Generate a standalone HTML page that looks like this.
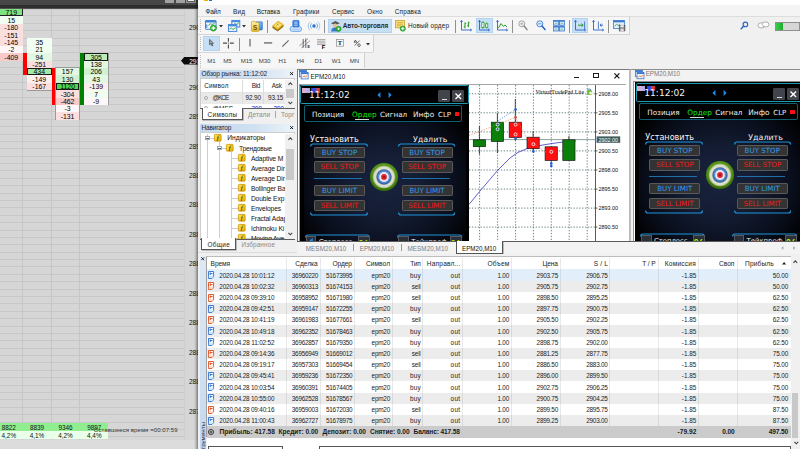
<!DOCTYPE html>
<html lang="ru">
<head>
<meta charset="utf-8">
<title>MetaTrader 5 - VirtualTradePad</title>
<style>
html,body{margin:0;padding:0;}
body{width:800px;height:449px;overflow:hidden;background:#f0f0f0;font-family:"Liberation Sans",sans-serif;}
#root{position:relative;width:800px;height:449px;overflow:hidden;}
#root div{position:absolute;box-sizing:border-box;}
#root svg{position:absolute;overflow:visible;}
.t{white-space:nowrap;}
</style>
</head>
<body>
<div id="root">
<!-- ===== left footprint chart window ===== -->
<div style="left:0.00px;top:0.00px;width:198.00px;height:449.00px;background:#d6d6d6;"></div>
<div style="left:0;top:8.40px;width:183.5px;height:431.60px;background:repeating-linear-gradient(to bottom,#c8c8c8 0,#c8c8c8 1px,rgba(0,0,0,0) 1px,rgba(0,0,0,0) 7.385px);"></div>
<div style="left:22.00px;top:9.00px;width:1.00px;height:431.00px;background:#c6c6c6;"></div>
<div style="left:51.10px;top:9.00px;width:1.00px;height:431.00px;background:#c6c6c6;"></div>
<div style="left:79.10px;top:9.00px;width:1.00px;height:431.00px;background:#c6c6c6;"></div>
<div style="left:183.80px;top:9.00px;width:0.80px;height:431.00px;background:#cecece;"></div>
<div style="left:0.00px;top:440.00px;width:198.00px;height:9.00px;background:#dcdcdc;"></div>
<div style="left:0;top:0;width:198px;height:10px;background:linear-gradient(to bottom,#474747 0,#474747 4.6px,#2e2e2e 5.2px,#2e2e2e 8.2px,#d6d6d6 9.6px);"></div>
<div style="left:165.40px;top:0.00px;width:8.60px;height:3.20px;background:#a2a0a0;"></div>
<div style="left:176.00px;top:0.00px;width:8.90px;height:3.20px;background:#a2a0a0;"></div>
<div style="left:186.00px;top:0.00px;width:10.00px;height:3.40px;background:#5a5a5a;border:0.7px solid #9a9a9a;border-top:none;"></div>
<div style="left:187.60px;top:0.00px;width:6.60px;height:1.40px;background:#f0f0f0;"></div>
<div style="left:26.50px;top:37.94px;width:25.50px;height:52.70px;border:1px solid #9a9a9a;"></div>
<div style="left:55.10px;top:67.48px;width:24.90px;height:52.70px;border:1px solid #9a9a9a;"></div>
<div style="left:83.50px;top:52.71px;width:25.30px;height:52.70px;border:1px solid #9a9a9a;"></div>
<div style="left:0.00px;top:8.90px;width:22.50px;height:7.38px;background:#7fe47f;border-right:1px solid #222;border-bottom:1px solid #222;"></div>
<div class="t" style="top:8px;font-size:6.9px;line-height:9px;color:#000;left:-88.75px;width:200px;text-align:center;"><span>719</span></div>
<div style="left:0.00px;top:16.29px;width:22.50px;height:7.38px;background:#f1fdf1;"></div>
<div class="t" style="top:16px;font-size:6.9px;line-height:9px;color:#000;left:-88.75px;width:200px;text-align:center;"><span>15</span></div>
<div style="left:0.00px;top:23.67px;width:22.50px;height:7.38px;background:#fbdfdf;"></div>
<div class="t" style="top:23px;font-size:6.9px;line-height:9px;color:#000;left:-88.75px;width:200px;text-align:center;"><span>-180</span></div>
<div style="left:0.00px;top:31.05px;width:22.50px;height:7.38px;background:#fbdfdf;"></div>
<div class="t" style="top:31px;font-size:6.9px;line-height:9px;color:#000;left:-88.75px;width:200px;text-align:center;"><span>-151</span></div>
<div style="left:0.00px;top:38.44px;width:22.50px;height:7.38px;background:#fbdfdf;"></div>
<div class="t" style="top:38px;font-size:6.9px;line-height:9px;color:#000;left:-88.75px;width:200px;text-align:center;"><span>-145</span></div>
<div style="left:0.00px;top:45.82px;width:22.50px;height:7.38px;background:#fff7f7;"></div>
<div class="t" style="top:45px;font-size:6.9px;line-height:9px;color:#000;left:-88.75px;width:200px;text-align:center;"><span>-2</span></div>
<div style="left:0.00px;top:53.21px;width:22.50px;height:7.38px;background:#f7c9c9;"></div>
<div class="t" style="top:53px;font-size:6.9px;line-height:9px;color:#000;left:-88.75px;width:200px;text-align:center;"><span>-409</span></div>
<div style="left:27.00px;top:38.44px;width:24.50px;height:7.38px;background:#f1fdf1;"></div>
<div class="t" style="top:38px;font-size:6.9px;line-height:9px;color:#000;left:-60.75px;width:200px;text-align:center;"><span>35</span></div>
<div style="left:27.00px;top:45.82px;width:24.50px;height:7.38px;background:#f1fdf1;"></div>
<div class="t" style="top:45px;font-size:6.9px;line-height:9px;color:#000;left:-60.75px;width:200px;text-align:center;"><span>21</span></div>
<div style="left:27.00px;top:53.21px;width:24.50px;height:7.38px;background:#e2f8e2;"></div>
<div class="t" style="top:53px;font-size:6.9px;line-height:9px;color:#000;left:-60.75px;width:200px;text-align:center;"><span>94</span></div>
<div style="left:27.00px;top:60.59px;width:24.50px;height:7.38px;background:#fbdfdf;"></div>
<div class="t" style="top:60px;font-size:6.9px;line-height:9px;color:#000;left:-60.75px;width:200px;text-align:center;"><span>-251</span></div>
<div style="left:27.00px;top:67.98px;width:24.50px;height:7.38px;background:#a6e8a6;border:0.8px solid #1a1a1a;"></div>
<div class="t" style="top:67px;font-size:6.9px;line-height:9px;color:#000;left:-60.75px;width:200px;text-align:center;"><span>434</span></div>
<div style="left:27.00px;top:75.37px;width:24.50px;height:7.38px;background:#fdeeee;"></div>
<div class="t" style="top:75px;font-size:6.9px;line-height:9px;color:#000;left:-60.75px;width:200px;text-align:center;"><span>-149</span></div>
<div style="left:27.00px;top:82.75px;width:24.50px;height:7.38px;background:#fbdfdf;"></div>
<div class="t" style="top:82px;font-size:6.9px;line-height:9px;color:#000;left:-60.75px;width:200px;text-align:center;"><span>-167</span></div>
<div style="left:55.60px;top:67.98px;width:23.90px;height:7.38px;background:#e2f8e2;"></div>
<div class="t" style="top:67px;font-size:6.9px;line-height:9px;color:#000;left:-32.45px;width:200px;text-align:center;"><span>157</span></div>
<div style="left:55.60px;top:75.37px;width:23.90px;height:7.38px;background:#d0f2d0;"></div>
<div class="t" style="top:75px;font-size:6.9px;line-height:9px;color:#000;left:-32.45px;width:200px;text-align:center;"><span>130</span></div>
<div style="left:55.60px;top:82.75px;width:23.90px;height:7.38px;background:#4fd64f;border:0.8px solid #1a1a1a;"></div>
<div class="t" style="top:82px;font-size:6.9px;line-height:9px;color:#000;left:-32.45px;width:200px;text-align:center;"><span>1120</span></div>
<div style="left:55.60px;top:90.14px;width:23.90px;height:7.38px;background:#fbdfdf;"></div>
<div class="t" style="top:90px;font-size:6.9px;line-height:9px;color:#000;left:-32.45px;width:200px;text-align:center;"><span>-304</span></div>
<div style="left:55.60px;top:97.52px;width:23.90px;height:7.38px;background:#f7c9c9;"></div>
<div class="t" style="top:97px;font-size:6.9px;line-height:9px;color:#000;left:-32.45px;width:200px;text-align:center;"><span>-462</span></div>
<div style="left:55.60px;top:104.91px;width:23.90px;height:7.38px;background:#fff7f7;"></div>
<div class="t" style="top:104px;font-size:6.9px;line-height:9px;color:#000;left:-32.45px;width:200px;text-align:center;"><span>-3</span></div>
<div style="left:55.60px;top:112.29px;width:23.90px;height:7.38px;background:#fbdfdf;"></div>
<div class="t" style="top:112px;font-size:6.9px;line-height:9px;color:#000;left:-32.45px;width:200px;text-align:center;"><span>-131</span></div>
<div style="left:84.00px;top:53.21px;width:24.30px;height:7.38px;background:#b8ecb8;border:0.8px solid #1a1a1a;"></div>
<div class="t" style="top:53px;font-size:6.9px;line-height:9px;color:#000;left:-3.85px;width:200px;text-align:center;"><span>305</span></div>
<div style="left:84.00px;top:60.59px;width:24.30px;height:7.38px;background:#e2f8e2;"></div>
<div class="t" style="top:60px;font-size:6.9px;line-height:9px;color:#000;left:-3.85px;width:200px;text-align:center;"><span>138</span></div>
<div style="left:84.00px;top:67.98px;width:24.30px;height:7.38px;background:#d0f2d0;"></div>
<div class="t" style="top:67px;font-size:6.9px;line-height:9px;color:#000;left:-3.85px;width:200px;text-align:center;"><span>206</span></div>
<div style="left:84.00px;top:75.37px;width:24.30px;height:7.38px;background:#e2f8e2;"></div>
<div class="t" style="top:75px;font-size:6.9px;line-height:9px;color:#000;left:-3.85px;width:200px;text-align:center;"><span>43</span></div>
<div style="left:84.00px;top:82.75px;width:24.30px;height:7.38px;background:#fdeeee;"></div>
<div class="t" style="top:82px;font-size:6.9px;line-height:9px;color:#000;left:-3.85px;width:200px;text-align:center;"><span>-139</span></div>
<div style="left:84.00px;top:90.14px;width:24.30px;height:7.38px;background:#f1fdf1;"></div>
<div class="t" style="top:90px;font-size:6.9px;line-height:9px;color:#000;left:-3.85px;width:200px;text-align:center;"><span>7</span></div>
<div style="left:84.00px;top:97.52px;width:24.30px;height:7.38px;background:#fff7f7;"></div>
<div class="t" style="top:97px;font-size:6.9px;line-height:9px;color:#000;left:-3.85px;width:200px;text-align:center;"><span>-9</span></div>
<div style="left:23.00px;top:53.21px;width:3.50px;height:22.16px;background:#ff0000;"></div>
<div style="left:51.60px;top:67.98px;width:3.60px;height:36.92px;background:#ff0000;"></div>
<div style="left:80.30px;top:53.21px;width:3.50px;height:51.70px;background:#008000;"></div>
<div style="left:0.00px;top:423.00px;width:108.30px;height:8.30px;background:#90ee90;"></div>
<div style="left:0.00px;top:431.30px;width:108.30px;height:7.70px;background:#e9ffe9;"></div>
<div class="t" style="top:423px;font-size:6.4px;line-height:9px;color:#111;left:-91.20px;width:200px;text-align:center;"><span>8822</span></div>
<div class="t" style="top:431px;font-size:6.4px;line-height:9px;color:#111;left:-91.20px;width:200px;text-align:center;"><span>4,2%</span></div>
<div class="t" style="top:423px;font-size:6.4px;line-height:9px;color:#111;left:-63.00px;width:200px;text-align:center;"><span>8839</span></div>
<div class="t" style="top:431px;font-size:6.4px;line-height:9px;color:#111;left:-63.00px;width:200px;text-align:center;"><span>4,1%</span></div>
<div class="t" style="top:423px;font-size:6.4px;line-height:9px;color:#111;left:-34.50px;width:200px;text-align:center;"><span>9346</span></div>
<div class="t" style="top:431px;font-size:6.4px;line-height:9px;color:#111;left:-34.50px;width:200px;text-align:center;"><span>4,2%</span></div>
<div class="t" style="top:423px;font-size:6.4px;line-height:9px;color:#111;left:-5.70px;width:200px;text-align:center;"><span>9897</span></div>
<div class="t" style="top:431px;font-size:6.4px;line-height:9px;color:#111;left:-5.70px;width:200px;text-align:center;"><span>4,4%</span></div>
<div class="t" style="top:426px;font-size:6.0px;line-height:8px;color:#333;letter-spacing:0.070px;left:93.80px;">Оставшееся время =00:07:59</div>
<div class="t" style="top:447px;font-size:6px;line-height:8px;color:#444;left:16.00px;">11:00</div>
<div class="t" style="top:447px;font-size:6px;line-height:8px;color:#444;left:60.00px;">11:10</div>
<div class="t" style="top:23px;font-size:6.6px;line-height:9px;color:#111;left:188.90px;">2903</div>
<div class="t" style="top:83px;font-size:6.6px;line-height:9px;color:#111;left:188.90px;">2903</div>
<div class="t" style="top:112px;font-size:6.6px;line-height:9px;color:#111;left:188.90px;">2893</div>
<div class="t" style="top:142px;font-size:6.6px;line-height:9px;color:#111;left:188.90px;">2893</div>
<div class="t" style="top:171px;font-size:6.6px;line-height:9px;color:#111;left:188.90px;">2883</div>
<div class="t" style="top:200px;font-size:6.6px;line-height:9px;color:#111;left:188.90px;">2883</div>
<div class="t" style="top:230px;font-size:6.6px;line-height:9px;color:#111;left:188.90px;">2883</div>
<div class="t" style="top:259px;font-size:6.6px;line-height:9px;color:#111;left:188.90px;">2883</div>
<div class="t" style="top:289px;font-size:6.6px;line-height:9px;color:#111;left:188.90px;">2883</div>
<div class="t" style="top:318px;font-size:6.6px;line-height:9px;color:#111;left:188.90px;">2883</div>
<div class="t" style="top:348px;font-size:6.6px;line-height:9px;color:#111;left:188.90px;">2883</div>
<div class="t" style="top:377px;font-size:6.6px;line-height:9px;color:#111;left:188.90px;">2883</div>
<div class="t" style="top:407px;font-size:6.6px;line-height:9px;color:#111;left:188.90px;">2873</div>
<svg style="left:181px;top:57px" width="17" height="8" viewBox="0 0 17 8"><path d="M0 3.8 L3.2 0 H17 V7.6 H3.2 Z" fill="#0a0a0a"/></svg>
<div class="t" style="top:57px;font-size:6.6px;line-height:9px;color:#fff;left:189.20px;">2902</div>
<!-- ===== MetaTrader main window chrome ===== -->
<div style="left:194.4px;top:0;width:3.8px;height:449px;background:linear-gradient(to right,rgba(0,0,0,0) 0,rgba(0,0,0,.12) 40%,rgba(0,0,0,.42) 100%);"></div>
<div style="left:198.20px;top:0.00px;width:601.80px;height:449.00px;background:#f0f0f0;"></div>
<div style="left:198.00px;top:0.00px;width:602.00px;height:5.30px;background:#ffffff;"></div>
<div style="left:198.00px;top:5.30px;width:602.00px;height:11.00px;background:#f4f4f4;"></div>
<div style="left:198.00px;top:16.30px;width:602.00px;height:0.80px;background:#dddddd;"></div>
<div style="left:198.00px;top:17.10px;width:431.00px;height:17.00px;background:#f6f6f6;"></div>
<div style="left:198.00px;top:34.00px;width:431.60px;height:0.80px;background:#d4d4d4;"></div>
<div style="left:628.80px;top:17.10px;width:0.80px;height:17.60px;background:#d4d4d4;"></div>
<div style="left:198.00px;top:34.80px;width:175.00px;height:17.20px;background:#f6f6f6;"></div>
<div style="left:198.00px;top:52.00px;width:175.00px;height:0.80px;background:#d8d8d8;"></div>
<div style="left:198.00px;top:52.80px;width:166.00px;height:15.60px;background:#f6f6f6;"></div>
<div style="left:372.50px;top:34.80px;width:0.80px;height:17.50px;background:#d0d0d0;"></div>
<div style="left:363.50px;top:52.80px;width:0.80px;height:15.60px;background:#d0d0d0;"></div>
<div style="left:203.60px;top:0.00px;width:4.80px;height:0.90px;background:#e8b400;"></div>
<div style="left:208.80px;top:0.00px;width:2.80px;height:0.90px;background:#1e6fd0;"></div>
<div class="t" style="top:7px;font-size:6.4px;line-height:9px;color:#1a1a1a;letter-spacing:-0.173px;left:205.50px;">Файл</div>
<div class="t" style="top:7px;font-size:6.4px;line-height:9px;color:#1a1a1a;letter-spacing:0.219px;left:233.00px;">Вид</div>
<div class="t" style="top:7px;font-size:6.4px;line-height:9px;color:#1a1a1a;letter-spacing:-0.094px;left:256.80px;">Вставка</div>
<div class="t" style="top:7px;font-size:6.4px;line-height:9px;color:#1a1a1a;letter-spacing:0.132px;left:293.00px;">Графики</div>
<div class="t" style="top:7px;font-size:6.4px;line-height:9px;color:#1a1a1a;letter-spacing:0.062px;left:332.00px;">Сервис</div>
<div class="t" style="top:7px;font-size:6.4px;line-height:9px;color:#1a1a1a;letter-spacing:0.214px;left:367.00px;">Окно</div>
<div class="t" style="top:7px;font-size:6.4px;line-height:9px;color:#1a1a1a;letter-spacing:0.154px;left:394.80px;">Справка</div>
<div style="left:200px;top:19px;width:1px;height:13px;background:repeating-linear-gradient(to bottom,#b8b8b8 0,#b8b8b8 1px,rgba(0,0,0,0) 1px,rgba(0,0,0,0) 2px);"></div>
<div style="left:200px;top:37px;width:1px;height:13px;background:repeating-linear-gradient(to bottom,#b8b8b8 0,#b8b8b8 1px,rgba(0,0,0,0) 1px,rgba(0,0,0,0) 2px);"></div>
<div style="left:200px;top:55px;width:1px;height:13px;background:repeating-linear-gradient(to bottom,#b8b8b8 0,#b8b8b8 1px,rgba(0,0,0,0) 1px,rgba(0,0,0,0) 2px);"></div>
<svg style="left:204.8px;top:19.9px" width="12.4" height="11.6" viewBox="0 0 12.4 11.6"><rect x="0.5" y="0.5" width="10.6" height="8.8" rx=".5" fill="#f0f6ff" stroke="#3f82dc" stroke-width="1"/><rect x="0.5" y="0.5" width="10.6" height="2" fill="#3f82dc"/><path d="M1.6 4.4 V8 M1 5.4 H2.6 M1 7 H2.6" stroke="#4a86d8" stroke-width=".7"/><path d="M3.4 5.4 L5.2 3.8 L7.4 4.4 L9.6 3.4" stroke="#38a838" stroke-width=".9" fill="none"/><circle cx="8.4" cy="8.1" r="3.1" fill="#36b836" stroke="#1f8f1f" stroke-width=".5"/><path d="M8.4 6.2 V10 M6.5 8.1 H10.3" stroke="#fff" stroke-width="1.2"/></svg>
<svg style="left:219px;top:24.6px" width="4" height="2.4" viewBox="0 0 4 2.4"><path d="M0 0 H4 L2 2.4 Z" fill="#333"/></svg>
<svg style="left:227.7px;top:19.6px" width="12.5" height="12" viewBox="0 0 12.5 12"><rect x="3.8" y="0.4" width="8" height="6.6" fill="#e4f0ff" stroke="#3d7fd8" stroke-width=".9"/><rect x="3.8" y="0.4" width="8" height="1.8" fill="#4a8be0"/><path d="M5 5 L7 3.6 L8.6 4.6 L10.8 2.8" stroke="#35a535" stroke-width=".9" fill="none"/><rect x="0.4" y="4.6" width="8.4" height="6.8" fill="#eef6ff" stroke="#3d7fd8" stroke-width=".9"/><rect x="0.4" y="4.6" width="8.4" height="1.8" fill="#4a8be0"/><path d="M1.4 9.2 L3.2 8 L5 9.4 L7.8 7.6" stroke="#35a535" stroke-width=".9" fill="none"/></svg>
<svg style="left:242px;top:24.6px" width="4" height="2.4" viewBox="0 0 4 2.4"><path d="M0 0 H4 L2 2.4 Z" fill="#333"/></svg>
<svg style="left:251px;top:19.6px" width="12" height="12" viewBox="0 0 12 12"><defs><linearGradient id="mk1" x1="0" y1="0" x2="1" y2="1"><stop offset="0" stop-color="#a8d4ff"/><stop offset="1" stop-color="#2a7fe0"/></linearGradient><linearGradient id="mk2" x1="0" y1="0" x2="0" y2="1"><stop offset="0" stop-color="#fff2a8"/><stop offset="1" stop-color="#ecbc28"/></linearGradient></defs><rect x="4.4" y="1.8" width="7" height="8.2" rx=".8" fill="url(#mk1)" stroke="#2a6fc4" stroke-width=".6"/><path d="M0.4 2.2 a.8 .8 0 0 1 .8 -.8 H4 l.8 1 H7.2 a.8 .8 0 0 1 .8 .8 V10.6 a.8 .8 0 0 1 -.8 .8 H1.2 a.8 .8 0 0 1 -.8 -.8 Z" fill="url(#mk2)" stroke="#c09410" stroke-width=".6"/><text x="4.2" y="9.8" font-size="6.4" font-weight="bold" text-anchor="middle" fill="#6e5200" font-family="Liberation Sans, sans-serif">S</text></svg>
<div style="left:266.80px;top:19.50px;width:0.90px;height:13.00px;background:#909090;"></div>
<svg style="left:272px;top:19.8px" width="12" height="11.6" viewBox="0 0 12 11.6"><path d="M0.5 5.8 L6.2 0.9 L11.5 4.5 L11.5 6.3 L5.7 11 L0.5 7.5 Z" fill="#a87a08"/><path d="M0.5 5.8 L6.2 0.9 L11.5 4.5 L5.7 9.4 Z" fill="#efc838"/><path d="M2.4 5.6 L6.2 2.4 L9.4 4.5 L5.7 7.6 Z" fill="#fbe88c"/><path d="M4.4 5.4 L7.2 3.6" stroke="#a87a08" stroke-width=".8"/><path d="M0.5 7.5 L5.7 11 L11.5 6.3" fill="none" stroke="#7e5a04" stroke-width=".7"/></svg>
<svg style="left:290px;top:19.6px" width="12.4" height="12" viewBox="0 0 12.4 12"><path d="M2.6 11.4 a2.5 2.5 0 0 1 -0.2 -5 a3 3 0 0 1 1.6 -1.2 h4.4 a3 3 0 0 1 1.6 1.6 a2.4 2.4 0 0 1 0 4.6 Z" fill="#cfe3fa" stroke="#5a96e0" stroke-width=".8"/><rect x="2.8" y="0.4" width="6.2" height="6.6" rx=".7" fill="#3c86e6" stroke="#205fc2" stroke-width=".6"/><path d="M4.2 2.2 H7.6 M4.2 3.8 H7.6 M4.2 5.4 H7.6" stroke="#d8e8ff" stroke-width=".7"/><path d="M2.2 9.2 H10.2" stroke="#8ab8f0" stroke-width=".7"/></svg>
<svg style="left:307.5px;top:19.8px" width="12" height="12" viewBox="0 0 12 12"><circle cx="6" cy="6" r="1.7" fill="#2a6fd0"/><path d="M3.6 3.4 a3.6 3.6 0 0 0 0 5.2 M8.4 3.4 a3.6 3.6 0 0 1 0 5.2" fill="none" stroke="#5a94e0" stroke-width=".8"/><path d="M2 1.8 a5.8 5.8 0 0 0 0 8.4 M10 1.8 a5.8 5.8 0 0 1 0 8.4" fill="none" stroke="#8ab4ea" stroke-width=".7"/></svg>
<div style="left:323.90px;top:19.50px;width:0.90px;height:13.00px;background:#909090;"></div>
<div style="left:327.50px;top:18.50px;width:64.30px;height:14.50px;background:#c6dff5;border:0.5px solid #b4d3ee;"></div>
<svg style="left:329.5px;top:19.8px" width="12" height="12" viewBox="0 0 12 12"><path d="M1 3.2 L5.4 1 L9.8 3.2 L5.4 5.2 Z" fill="#555"/><circle cx="5.2" cy="5.6" r="2.1" fill="#e8c090"/><path d="M1.2 11.4 a4 4 0 0 1 8 0 Z" fill="#3a78c8"/><circle cx="8.6" cy="8.8" r="2.6" fill="#2fb42f" stroke="#1c8a1c" stroke-width=".5"/><path d="M7.8 7.4 L10 8.8 L7.8 10.2 Z" fill="#fff"/></svg>
<div class="t" style="top:21px;font-size:6.4px;line-height:9px;color:#2c2c2c;font-weight:bold;letter-spacing:-0.093px;left:342.80px;">Авто-торговля</div>
<svg style="left:395.4px;top:19.6px" width="11" height="12" viewBox="0 0 11 12"><rect x="0.5" y="0.6" width="9" height="7.2" fill="#f8e08a" stroke="#c8a020" stroke-width=".8"/><path d="M1.8 2.6 H8 M1.8 4.2 H8 M1.8 5.8 H6" stroke="#c8a020" stroke-width=".7"/><circle cx="7.8" cy="8.6" r="2.7" fill="#34b534" stroke="#1f8f1f" stroke-width=".5"/><path d="M7.8 7 V10.2 M6.2 8.6 H9.4" stroke="#fff" stroke-width="1"/></svg>
<div class="t" style="top:21px;font-size:6.4px;line-height:9px;color:#222;letter-spacing:0.169px;left:408.00px;">Новый ордер</div>
<div style="left:455.10px;top:19.50px;width:0.90px;height:13.00px;background:#909090;"></div>
<svg style="left:459.6px;top:19.8px" width="12" height="12" viewBox="0 0 12 12"><path d="M1.5 0.5 V10 H11.5" stroke="#2a62c8" stroke-width=".9" fill="none"/><path d="M0.3 2 L1.5 0.3 L2.7 2 M10 8.8 L11.7 10 L10 11.2" stroke="#2a62c8" stroke-width=".7" fill="none"/><path d="M5 2.4 V8.4 M3.8 6.8 H5 M5 3.6 H6.2 M8.4 1.6 V7.2 M7.2 5.6 H8.4 M8.4 2.8 H9.6" stroke="#2c9a2c" stroke-width="1"/></svg>
<div style="left:475.90px;top:18.40px;width:16.90px;height:14.40px;background:#c6dff5;border:0.5px solid #b4d3ee;"></div>
<svg style="left:478.4px;top:19.8px" width="12" height="12" viewBox="0 0 12 12"><path d="M1.5 0.5 V10 H11.5" stroke="#2a62c8" stroke-width=".9" fill="none"/><path d="M0.3 2 L1.5 0.3 L2.7 2 M10 8.8 L11.7 10 L10 11.2" stroke="#2a62c8" stroke-width=".7" fill="none"/><rect x="3.8" y="2.6" width="2.2" height="5" fill="#fff" stroke="#2c9a2c" stroke-width=".8"/><path d="M4.9 1.2 V2.6 M4.9 7.6 V8.8" stroke="#2c9a2c" stroke-width=".8"/><rect x="7.6" y="3.8" width="2.2" height="3.4" fill="#fff" stroke="#2c9a2c" stroke-width=".8"/><path d="M8.7 2.4 V3.8 M8.7 7.2 V8.6" stroke="#2c9a2c" stroke-width=".8"/></svg>
<svg style="left:495.6px;top:19.8px" width="12" height="12" viewBox="0 0 12 12"><path d="M1.5 0.5 V10 H11.5" stroke="#2a62c8" stroke-width=".9" fill="none"/><path d="M0.3 2 L1.5 0.3 L2.7 2 M10 8.8 L11.7 10 L10 11.2" stroke="#2a62c8" stroke-width=".7" fill="none"/><path d="M2.4 8 L5 3.6 L7.4 6.4 L9 5 L11 7" stroke="#2c9a2c" stroke-width="1" fill="none"/></svg>
<div style="left:512.20px;top:19.50px;width:0.90px;height:13.00px;background:#909090;"></div>
<svg style="left:517.6px;top:20.2px" width="10" height="11" viewBox="0 0 10 11"><circle cx="3.8" cy="3.8" r="3" fill="#f4f4f4" stroke="#9a9a9a" stroke-width=".9"/><path d="M2.2 3.8 H5.4 M3.8 2.2 V5.4" stroke="#9a9a9a" stroke-width=".7"/><path d="M6 6 L9 9.6" stroke="#8a8a8a" stroke-width="1.5" stroke-linecap="round"/></svg>
<svg style="left:535.6px;top:20.2px" width="10" height="11" viewBox="0 0 10 11"><circle cx="3.8" cy="3.8" r="3" fill="#e8f2ff" stroke="#3a78d0" stroke-width=".9"/><path d="M2.2 3.8 H5.4" stroke="#3a78d0" stroke-width=".8"/><path d="M6 6 L9 9.6" stroke="#2a62c0" stroke-width="1.5" stroke-linecap="round"/></svg>
<svg style="left:553px;top:20px" width="12" height="11.5" viewBox="0 0 12 11.5"><rect x="0.4" y="0.4" width="5" height="4.8" fill="#dceaff" stroke="#3a78d0" stroke-width=".8"/><rect x="6.4" y="0.4" width="5" height="4.8" fill="#dceaff" stroke="#3a78d0" stroke-width=".8"/><rect x="0.4" y="6.2" width="5" height="4.8" fill="#dceaff" stroke="#3a78d0" stroke-width=".8"/><rect x="6.4" y="6.2" width="5" height="4.8" fill="#dceaff" stroke="#3a78d0" stroke-width=".8"/><rect x="0.4" y="0.4" width="5" height="1.3" fill="#3a78d0"/><rect x="6.4" y="0.4" width="5" height="1.3" fill="#3a78d0"/><rect x="0.4" y="6.2" width="5" height="1.3" fill="#3a78d0"/><rect x="6.4" y="6.2" width="5" height="1.3" fill="#3a78d0"/><path d="M1.4 4 L2.8 3 L4.4 3.8 M7.4 4 L8.8 3 L10.4 3.8 M1.4 9.8 L2.8 8.8 L4.4 9.6 M7.4 9.8 L8.8 8.8 L10.4 9.6" stroke="#35a535" stroke-width=".6" fill="none"/></svg>
<div style="left:568.90px;top:19.50px;width:0.90px;height:13.00px;background:#909090;"></div>
<div style="left:572.00px;top:18.40px;width:16.40px;height:14.40px;background:#c6dff5;border:0.5px solid #b4d3ee;"></div>
<svg style="left:574.4px;top:19.8px" width="12" height="12" viewBox="0 0 12 12"><path d="M1.5 0.5 V10 H11.5" stroke="#2a62c8" stroke-width=".9" fill="none"/><path d="M0.3 2 L1.5 0.3 L2.7 2 M10 8.8 L11.7 10 L10 11.2" stroke="#2a62c8" stroke-width=".7" fill="none"/><path d="M4 5.2 H9 M7.4 3.6 L9.2 5.2 L7.4 6.8" stroke="#2c9a2c" stroke-width="1" fill="none"/><path d="M10.6 1.5 V9" stroke="#2a62c8" stroke-width=".8"/></svg>
<svg style="left:592px;top:19.8px" width="12" height="12" viewBox="0 0 12 12"><path d="M1.5 0.5 V10 H11.5" stroke="#2a62c8" stroke-width=".9" fill="none"/><path d="M0.3 2 L1.5 0.3 L2.7 2 M10 8.8 L11.7 10 L10 11.2" stroke="#2a62c8" stroke-width=".7" fill="none"/><path d="M6.4 1.5 V9" stroke="#2a62c8" stroke-width=".8"/><path d="M8 5.2 H11 M9.6 3.8 L8 5.2 L9.6 6.6" stroke="#2a62c8" stroke-width=".9" fill="none"/></svg>
<div style="left:608.20px;top:19.50px;width:0.90px;height:13.00px;background:#909090;"></div>
<svg style="left:613px;top:20px" width="12.5" height="11.5" viewBox="0 0 12.5 11.5"><rect x="0.4" y="0.5" width="11" height="8" fill="#e4efff" stroke="#3a78d0" stroke-width=".8"/><rect x="0.4" y="0.5" width="11" height="1.8" fill="#3a78d0"/><path d="M1.6 6.4 L3.6 4.2 L5.4 5.6 L7 3.8" stroke="#35a535" stroke-width=".8" fill="none"/><rect x="6.2" y="5.2" width="5.8" height="5.8" fill="#777" stroke="#444" stroke-width=".5"/><rect x="7.4" y="5.2" width="3.4" height="2.2" fill="#eee"/><rect x="7.4" y="8.6" width="3.4" height="2.4" fill="#ddd"/></svg>
<div style="left:203.00px;top:36.20px;width:16.80px;height:14.40px;background:#c6dff5;border:0.5px solid #b4d3ee;"></div>
<svg style="left:208.6px;top:39.4px" width="5.4" height="7.6" viewBox="0 0 5.4 7.6"><path d="M0.6 0.4 V5.8 L1.9 4.6 L3 7 L3.8 6.6 L2.8 4.3 L4.5 4.2 Z" fill="#a8a8a8" stroke="#2c2c2c" stroke-width=".6" stroke-linejoin="round"/></svg>
<svg style="left:223.2px;top:38px" width="11" height="10.5" viewBox="0 0 11 10.5"><path d="M5.4 0 V3.8 M5.4 6.4 V10.6 M0 5.1 H4 M6.9 5.1 H10.8" stroke="#4c4c4c" stroke-width="1.1"/><rect x="4.9" y="4.6" width="1" height="1" fill="#4c4c4c"/></svg>
<div style="left:239.30px;top:37.50px;width:0.90px;height:13.00px;background:#909090;"></div>
<svg style="left:249px;top:39.2px" width="2" height="7.6" viewBox="0 0 2 7.6"><path d="M1 0 V7.4" stroke="#888" stroke-width="1.6"/></svg>
<svg style="left:263.8px;top:42.2px" width="8.4" height="2" viewBox="0 0 8.4 2"><path d="M0 0.9 H8.2" stroke="#777" stroke-width="1.5"/></svg>
<svg style="left:282.2px;top:39.6px" width="7" height="7" viewBox="0 0 7 7"><path d="M0.3 6.6 L6.6 0.4" stroke="#6a6a6a" stroke-width="1.2"/></svg>
<svg style="left:298.6px;top:38.4px" width="11.5" height="10.5" viewBox="0 0 11.5 10.5"><path d="M0.6 7.6 L8.8 0.8 M2.6 9.8 L10.8 3" stroke="#555" stroke-width=".8" stroke-dasharray="1.6 .7"/><path d="M4.2 1 V9.6 M6.8 0.4 V10" stroke="#444" stroke-width=".8"/><text x="8.6" y="10.4" font-size="3.6" font-weight="bold" fill="#222" font-family="Liberation Sans, sans-serif">E</text></svg>
<svg style="left:317.4px;top:38.8px" width="9.5" height="10" viewBox="0 0 9.5 10"><path d="M0 0.8 H8.4 M0 3 H8.4 M0 5.2 H8.4" stroke="#777" stroke-width=".8"/><text x="4.8" y="10" font-size="5.6" font-weight="bold" fill="#000" font-family="Liberation Sans, sans-serif">F</text></svg>
<svg style="left:336px;top:39.4px" width="8" height="8" viewBox="0 0 8 8"><rect x="0.4" y="0.6" width="7" height="6.6" fill="#fafafa" stroke="#8c8c8c" stroke-width=".7"/><text x="3.9" y="6.3" font-size="6.4" font-weight="bold" text-anchor="middle" fill="#1a1a1a" font-family="Liberation Serif, serif">T</text></svg>
<svg style="left:352.8px;top:39px" width="8.5" height="9" viewBox="0 0 8.5 9"><path d="M1 3.2 L2.4 1 L3.8 3.2 Z" fill="none" stroke="#444" stroke-width=".8"/><circle cx="6" cy="6.2" r="1.3" fill="none" stroke="#444" stroke-width=".8"/><path d="M1.6 6.6 L6.6 1.6" stroke="#444" stroke-width=".8"/></svg>
<svg style="left:365.5px;top:42.6px" width="4" height="2.4" viewBox="0 0 4 2.4"><path d="M0 0 H4 L2 2.4 Z" fill="#333"/></svg>
<div class="t" style="top:56px;font-size:6.1px;line-height:9px;color:#444;left:111.50px;width:200px;text-align:center;"><span>M1</span></div>
<div class="t" style="top:56px;font-size:6.1px;line-height:9px;color:#444;left:127.40px;width:200px;text-align:center;"><span>M5</span></div>
<div class="t" style="top:56px;font-size:6.1px;line-height:9px;color:#444;left:146.60px;width:200px;text-align:center;"><span>M15</span></div>
<div class="t" style="top:56px;font-size:6.1px;line-height:9px;color:#444;left:164.60px;width:200px;text-align:center;"><span>M30</span></div>
<div class="t" style="top:56px;font-size:6.1px;line-height:9px;color:#444;left:182.50px;width:200px;text-align:center;"><span>H1</span></div>
<div class="t" style="top:56px;font-size:6.1px;line-height:9px;color:#444;left:200.30px;width:200px;text-align:center;"><span>H4</span></div>
<div class="t" style="top:56px;font-size:6.1px;line-height:9px;color:#444;left:218.30px;width:200px;text-align:center;"><span>D1</span></div>
<div class="t" style="top:56px;font-size:6.1px;line-height:9px;color:#444;left:236.40px;width:200px;text-align:center;"><span>W1</span></div>
<div class="t" style="top:56px;font-size:6.1px;line-height:9px;color:#444;left:254.40px;width:200px;text-align:center;"><span>MN</span></div>
<svg style="left:740px;top:21px" width="9" height="9" viewBox="0 0 9 9"><circle cx="5.4" cy="3.4" r="2.3" fill="none" stroke="#2b62c4" stroke-width="1.1"/><path d="M3.8 5 L1.2 7.8" stroke="#2b62c4" stroke-width="1.4" stroke-linecap="round"/></svg>
<svg style="left:757px;top:21px" width="13" height="9" viewBox="0 0 13 9"><ellipse cx="4.5" cy="4.4" rx="3.6" ry="2.6" fill="#fff" stroke="#9a9a9a" stroke-width=".8"/><ellipse cx="8.6" cy="3.4" rx="3.4" ry="2.5" fill="#fff" stroke="#9a9a9a" stroke-width=".8"/></svg>
<div style="left:775.00px;top:22.20px;width:25.00px;height:8.40px;background:#d6d6d6;border:0.9px solid #8e8e8e;"></div>
<div style="left:775.9px;top:23.1px;width:7.4px;height:6.6px;background:linear-gradient(to right,#36d046,#22a830);"></div>
<!-- ===== Market Watch ===== -->
<div style="left:199.50px;top:69.50px;width:97.00px;height:52.00px;background:#f0f0f0;"></div>
<div style="left:200.2px;top:69.8px;width:95.6px;height:8.2px;background:linear-gradient(to right,#c5d9ee 0,#cfe0f2 55%,#eef3f9 100%);"></div>
<div class="t" style="top:69px;font-size:6.5px;line-height:9px;color:#16243c;letter-spacing:-0.095px;left:201.60px;">Обзор рынка: 11:12:02</div>
<svg style="left:289.79999999999995px;top:72.4px" width="3.2" height="3.2" viewBox="0 0 3.2 3.2"><path d="M0.2 0.2 L3.0 3.0 M3.0 0.2 L0.2 3.0" stroke="#111" stroke-width="1.0"/></svg>
<div style="left:200.30px;top:78.40px;width:95.20px;height:30.10px;background:#ffffff;border:0.6px solid #cdcdcd;"></div>
<div style="left:201.00px;top:92.00px;width:84.00px;height:12.00px;background:#e9e9e9;"></div>
<div style="left:242.30px;top:79.50px;width:0.70px;height:28.50px;background:#dcdcdc;"></div>
<div style="left:263.20px;top:79.50px;width:0.70px;height:28.50px;background:#dcdcdc;"></div>
<div style="left:201.00px;top:91.60px;width:84.00px;height:0.70px;background:#e2e2e2;"></div>
<div class="t" style="top:81px;font-size:6.4px;line-height:9px;color:#222;letter-spacing:0.251px;left:204.20px;">Символ</div>
<div class="t" style="top:81px;font-size:6.4px;line-height:9px;color:#222;letter-spacing:-0.325px;right:540.03px;">Bid</div>
<div class="t" style="top:81px;font-size:6.4px;line-height:9px;color:#222;letter-spacing:-0.228px;right:518.23px;">Ask</div>
<svg style="left:204.4px;top:96px" width="4" height="4" viewBox="0 0 4 4"><circle cx="2" cy="2" r="1.5" fill="#f4f4f4" stroke="#8a8a8a" stroke-width=".7"/></svg>
<div class="t" style="top:93px;font-size:6.4px;line-height:9px;color:#222;letter-spacing:-1.014px;left:212.60px;">@KCE</div>
<div class="t" style="top:93px;font-size:6.4px;line-height:9px;color:#222;letter-spacing:-0.150px;right:539.15px;">92.90</div>
<div class="t" style="top:93px;font-size:6.4px;line-height:9px;color:#222;letter-spacing:-0.150px;right:516.75px;">93.15</div>
<div style="left:201px;top:104px;width:84px;height:4.2px;overflow:hidden;background:#fff;"><svg style="left:3.4px;top:1.6px" width="4" height="4" viewBox="0 0 4 4"><circle cx="2" cy="2" r="1.5" fill="#f4f4f4" stroke="#8a8a8a" stroke-width=".7"/></svg><div class="t" style="left:11.6px;top:-0.4px;font-size:6.4px;line-height:9px;color:#222;">@MES</div><div class="t" style="left:50.5px;top:-0.4px;font-size:6.4px;line-height:9px;color:#1414e0;">290</div><div class="t" style="left:72.5px;top:-0.4px;font-size:6.4px;line-height:9px;color:#1414e0;">290</div></div>
<div style="left:285.30px;top:79.50px;width:9.90px;height:28.60px;background:#f0f0f0;"></div>
<svg style="left:287.9px;top:82.4px" width="4.6" height="3.6" viewBox="0 0 4.6 3.6"><path d="M0.4 2.8 L2.3 0.8 L4.2 2.8" stroke="#444" stroke-width="1.1" fill="none"/></svg>
<div style="left:286.20px;top:88.60px;width:8.20px;height:9.40px;background:#c9c9c9;"></div>
<svg style="left:287.9px;top:101.4px" width="4.6" height="3.6" viewBox="0 0 4.6 3.6"><path d="M0.4 0.8 L2.3 2.8 L4.2 0.8" stroke="#444" stroke-width="1.1" fill="none"/></svg>
<div style="left:200.00px;top:108.30px;width:95.00px;height:1.00px;background:#5c5c5c;"></div>
<div style="left:202.00px;top:108.00px;width:40.50px;height:11.60px;background:#ffffff;border:0.8px solid #555;border-top:none;box-shadow:0.6px 0.6px 0 #999;"></div>
<div class="t" style="top:110px;font-size:6.4px;line-height:9px;color:#222;letter-spacing:0.327px;left:207.60px;">Символы</div>
<div class="t" style="top:110px;font-size:6.4px;line-height:9px;color:#8a8a8a;letter-spacing:0.122px;left:248.00px;">Детали</div>
<div style="left:275.40px;top:110.60px;width:0.80px;height:7.00px;background:#aaa;"></div>
<div class="t" style="top:110px;font-size:6.4px;line-height:9px;color:#8a8a8a;letter-spacing:0.185px;left:281.00px;">Торг</div>
<div style="left:294.60px;top:109.40px;width:3.00px;height:10.00px;background:#f0f0f0;"></div>
<!-- ===== Navigator ===== -->
<div style="left:200.2px;top:123.8px;width:95.6px;height:8.2px;background:linear-gradient(to right,#c5d9ee 0,#cfe0f2 55%,#eef3f9 100%);"></div>
<div class="t" style="top:123px;font-size:6.5px;line-height:9px;color:#16243c;letter-spacing:-0.154px;left:201.40px;">Навигатор</div>
<svg style="left:289.79999999999995px;top:126.4px" width="3.2" height="3.2" viewBox="0 0 3.2 3.2"><path d="M0.2 0.2 L3.0 3.0 M3.0 0.2 L0.2 3.0" stroke="#111" stroke-width="1.0"/></svg>
<div style="left:200.30px;top:132.40px;width:95.20px;height:106.60px;background:#ffffff;border:0.6px solid #cdcdcd;"></div>
<div style="left:207.00px;top:133.60px;width:0.80px;height:105.00px;background:#cdcdcd;"></div>
<div style="left:219.10px;top:141.60px;width:0.80px;height:97.00px;background:#cdcdcd;"></div>
<div style="left:231.00px;top:151.80px;width:0.80px;height:87.00px;background:#cdcdcd;"></div>
<div style="left:209.60px;top:137.50px;width:5.00px;height:0.80px;background:#cdcdcd;"></div>
<div style="left:221.80px;top:147.70px;width:5.00px;height:0.80px;background:#cdcdcd;"></div>
<svg style="left:0;top:0" width="0" height="0"><defs><linearGradient id="fy" x1="0" y1="0" x2="1" y2="1"><stop offset="0" stop-color="#ffe25a"/><stop offset="0.55" stop-color="#f8c820"/><stop offset="1" stop-color="#e6a400"/></linearGradient></defs></svg>
<div style="left:205.00px;top:135.50px;width:4.80px;height:4.80px;background:#fff;border:0.7px solid #a8a8a8;"></div>
<div style="left:206.10px;top:137.50px;width:2.60px;height:0.80px;background:#4a6a9c;"></div>
<svg style="left:214.35px;top:133.95px" width="7.5" height="7.5" viewBox="0 0 7.5 7.5"><rect x="0.35" y="0.35" width="6.8" height="6.8" rx=".9" fill="url(#fy)" stroke="#c08c00" stroke-width=".7"/><text x="3.7" y="5.9" font-size="7" font-style="italic" text-anchor="middle" fill="#100c00" font-family="Liberation Serif, serif">f</text></svg>
<div class="t" style="top:133px;font-size:6.7px;line-height:9px;color:#111;letter-spacing:-0.024px;left:227.30px;">Индикаторы</div>
<div style="left:217.10px;top:145.70px;width:4.80px;height:4.80px;background:#fff;border:0.7px solid #a8a8a8;"></div>
<div style="left:218.20px;top:147.70px;width:2.60px;height:0.80px;background:#4a6a9c;"></div>
<svg style="left:226.25px;top:144.15px" width="7.5" height="7.5" viewBox="0 0 7.5 7.5"><rect x="0.35" y="0.35" width="6.8" height="6.8" rx=".9" fill="url(#fy)" stroke="#c08c00" stroke-width=".7"/><text x="3.7" y="5.9" font-size="7" font-style="italic" text-anchor="middle" fill="#100c00" font-family="Liberation Serif, serif">f</text></svg>
<div class="t" style="top:144px;font-size:6.7px;line-height:9px;color:#111;letter-spacing:-0.193px;left:239.00px;">Трендовые</div>
<div style="left:201px;top:152px;width:84.3px;height:86.6px;overflow:hidden;">
<div style="left:30.4px;top:5.60px;width:6.6px;height:0.8px;background:#cdcdcd;"></div>
<svg style="left:37.15px;top:2.25px" width="7.5" height="7.5" viewBox="0 0 7.5 7.5"><rect x="0.35" y="0.35" width="6.8" height="6.8" rx=".9" fill="url(#fy)" stroke="#c08c00" stroke-width=".7"/><text x="3.7" y="5.9" font-size="7" font-style="italic" text-anchor="middle" fill="#100c00" font-family="Liberation Serif, serif">f</text></svg>
<div class="t" style="left:49.9px;top:1.70px;font-size:6.7px;letter-spacing:-0.12px;line-height:9px;color:#111;">Adaptive M</div>
<div style="left:30.4px;top:15.63px;width:6.6px;height:0.8px;background:#cdcdcd;"></div>
<svg style="left:37.15px;top:12.28px" width="7.5" height="7.5" viewBox="0 0 7.5 7.5"><rect x="0.35" y="0.35" width="6.8" height="6.8" rx=".9" fill="url(#fy)" stroke="#c08c00" stroke-width=".7"/><text x="3.7" y="5.9" font-size="7" font-style="italic" text-anchor="middle" fill="#100c00" font-family="Liberation Serif, serif">f</text></svg>
<div class="t" style="left:49.9px;top:11.73px;font-size:6.7px;letter-spacing:-0.12px;line-height:9px;color:#111;">Average Dir</div>
<div style="left:30.4px;top:25.66px;width:6.6px;height:0.8px;background:#cdcdcd;"></div>
<svg style="left:37.15px;top:22.31px" width="7.5" height="7.5" viewBox="0 0 7.5 7.5"><rect x="0.35" y="0.35" width="6.8" height="6.8" rx=".9" fill="url(#fy)" stroke="#c08c00" stroke-width=".7"/><text x="3.7" y="5.9" font-size="7" font-style="italic" text-anchor="middle" fill="#100c00" font-family="Liberation Serif, serif">f</text></svg>
<div class="t" style="left:49.9px;top:21.76px;font-size:6.7px;letter-spacing:-0.12px;line-height:9px;color:#111;">Average Dir</div>
<div style="left:30.4px;top:35.69px;width:6.6px;height:0.8px;background:#cdcdcd;"></div>
<svg style="left:37.15px;top:32.34px" width="7.5" height="7.5" viewBox="0 0 7.5 7.5"><rect x="0.35" y="0.35" width="6.8" height="6.8" rx=".9" fill="url(#fy)" stroke="#c08c00" stroke-width=".7"/><text x="3.7" y="5.9" font-size="7" font-style="italic" text-anchor="middle" fill="#100c00" font-family="Liberation Serif, serif">f</text></svg>
<div class="t" style="left:49.9px;top:31.79px;font-size:6.7px;letter-spacing:-0.12px;line-height:9px;color:#111;">Bollinger Ba</div>
<div style="left:30.4px;top:45.72px;width:6.6px;height:0.8px;background:#cdcdcd;"></div>
<svg style="left:37.15px;top:42.37px" width="7.5" height="7.5" viewBox="0 0 7.5 7.5"><rect x="0.35" y="0.35" width="6.8" height="6.8" rx=".9" fill="url(#fy)" stroke="#c08c00" stroke-width=".7"/><text x="3.7" y="5.9" font-size="7" font-style="italic" text-anchor="middle" fill="#100c00" font-family="Liberation Serif, serif">f</text></svg>
<div class="t" style="left:49.9px;top:41.82px;font-size:6.7px;letter-spacing:-0.12px;line-height:9px;color:#111;">Double Exp</div>
<div style="left:30.4px;top:55.75px;width:6.6px;height:0.8px;background:#cdcdcd;"></div>
<svg style="left:37.15px;top:52.40px" width="7.5" height="7.5" viewBox="0 0 7.5 7.5"><rect x="0.35" y="0.35" width="6.8" height="6.8" rx=".9" fill="url(#fy)" stroke="#c08c00" stroke-width=".7"/><text x="3.7" y="5.9" font-size="7" font-style="italic" text-anchor="middle" fill="#100c00" font-family="Liberation Serif, serif">f</text></svg>
<div class="t" style="left:49.9px;top:51.85px;font-size:6.7px;letter-spacing:-0.12px;line-height:9px;color:#111;">Envelopes</div>
<div style="left:30.4px;top:65.78px;width:6.6px;height:0.8px;background:#cdcdcd;"></div>
<svg style="left:37.15px;top:62.43px" width="7.5" height="7.5" viewBox="0 0 7.5 7.5"><rect x="0.35" y="0.35" width="6.8" height="6.8" rx=".9" fill="url(#fy)" stroke="#c08c00" stroke-width=".7"/><text x="3.7" y="5.9" font-size="7" font-style="italic" text-anchor="middle" fill="#100c00" font-family="Liberation Serif, serif">f</text></svg>
<div class="t" style="left:49.9px;top:61.88px;font-size:6.7px;letter-spacing:-0.12px;line-height:9px;color:#111;">Fractal Adap</div>
<div style="left:30.4px;top:75.81px;width:6.6px;height:0.8px;background:#cdcdcd;"></div>
<svg style="left:37.15px;top:72.46px" width="7.5" height="7.5" viewBox="0 0 7.5 7.5"><rect x="0.35" y="0.35" width="6.8" height="6.8" rx=".9" fill="url(#fy)" stroke="#c08c00" stroke-width=".7"/><text x="3.7" y="5.9" font-size="7" font-style="italic" text-anchor="middle" fill="#100c00" font-family="Liberation Serif, serif">f</text></svg>
<div class="t" style="left:49.9px;top:71.91px;font-size:6.7px;letter-spacing:-0.12px;line-height:9px;color:#111;">Ichimoku Ki</div>
<div style="left:30.4px;top:85.84px;width:6.6px;height:0.8px;background:#cdcdcd;"></div>
<svg style="left:37.15px;top:82.49px" width="7.5" height="7.5" viewBox="0 0 7.5 7.5"><rect x="0.35" y="0.35" width="6.8" height="6.8" rx=".9" fill="url(#fy)" stroke="#c08c00" stroke-width=".7"/><text x="3.7" y="5.9" font-size="7" font-style="italic" text-anchor="middle" fill="#100c00" font-family="Liberation Serif, serif">f</text></svg>
<div class="t" style="left:49.9px;top:81.94px;font-size:6.7px;letter-spacing:-0.12px;line-height:9px;color:#111;">Moving Ave</div>
</div>
<div style="left:285.30px;top:133.50px;width:9.90px;height:105.00px;background:#f0f0f0;"></div>
<svg style="left:287.9px;top:136.6px" width="4.6" height="3.6" viewBox="0 0 4.6 3.6"><path d="M0.4 2.8 L2.3 0.8 L4.2 2.8" stroke="#444" stroke-width="1.1" fill="none"/></svg>
<div style="left:286.20px;top:149.00px;width:8.20px;height:31.00px;background:#c9c9c9;"></div>
<svg style="left:287.9px;top:232.39999999999998px" width="4.6" height="3.6" viewBox="0 0 4.6 3.6"><path d="M0.4 0.8 L2.3 2.8 L4.2 0.8" stroke="#444" stroke-width="1.1" fill="none"/></svg>
<div style="left:200.00px;top:238.90px;width:95.00px;height:1.00px;background:#5c5c5c;"></div>
<div style="left:201.40px;top:238.40px;width:35.00px;height:11.40px;background:#ffffff;border:0.8px solid #555;border-top:none;box-shadow:0.6px 0.6px 0 #999;"></div>
<div class="t" style="top:240px;font-size:6.4px;line-height:9px;color:#222;letter-spacing:0.346px;left:207.40px;">Общие</div>
<div class="t" style="top:240px;font-size:6.4px;line-height:9px;color:#8a8a8a;letter-spacing:0.151px;left:241.40px;">Избранное</div>
<!-- ===== chart windows (MDI area) ===== -->
<div style="left:297.00px;top:69.00px;width:503.00px;height:172.50px;background:#f0f0f0;"></div>
<div style="left:297.00px;top:68.80px;width:332.60px;height:172.80px;background:#ffffff;border:1px solid #7a7a7a;border-right:0.8px solid #b8b8b8;"></div>
<svg style="left:299.2px;top:70.2px" width="9.4" height="9.4" viewBox="0 0 8 8"><rect x="0.4" y="0.4" width="6" height="5.4" fill="#eaf2ff" stroke="#3a78d0" stroke-width=".7"/><rect x="0.4" y="0.4" width="6" height="1.3" fill="#3a78d0"/><rect x="1.8" y="2.2" width="6" height="5.4" fill="#f4f8ff" stroke="#3a78d0" stroke-width=".7"/><rect x="1.8" y="2.2" width="6" height="1.3" fill="#3a78d0"/><path d="M2.8 6.4 L4.2 5 L5.4 6 L7 4.6" stroke="#e05a20" stroke-width=".7" fill="none"/></svg>
<div class="t" style="top:72px;font-size:6.3px;line-height:9px;color:#111;letter-spacing:-0.007px;left:310.60px;">EPM20,M10</div>
<div style="left:573.80px;top:76.50px;width:5.00px;height:1.20px;background:#1a1a1a;"></div>
<div style="left:593.20px;top:72.80px;width:5.60px;height:5.60px;border:0.9px solid #1a1a1a;border-top-width:1.2px;"></div>
<svg style="left:613.8px;top:72.5px" width="5.8" height="5.8" viewBox="0 0 5.8 5.8"><path d="M0.4 0.4 L5.4 5.4 M5.4 0.4 L0.4 5.4" stroke="#111" stroke-width="1.2"/></svg>
<div style="left:299.40px;top:83.60px;width:326.60px;height:157.60px;background:#ffffff;border-top:1.3px solid #a6a6a6;border-left:0.8px solid #999;border-right:0.8px solid #c8c8c8;"></div>
<svg style="left:469px;top:85px;overflow:hidden" width="159" height="156" viewBox="469 85 159 156">
<rect x="469" y="85" width="159" height="156" fill="#fff"/>
<path d="M479.6 85 V241 M497.6 85 V241 M515.6 85 V241 M533.4 85 V241 M551.3 85 V241 M569.2 85 V241 M587.2 85 V241 M469 93.8 H595.5 M469 112.8 H595.5 M469 131.9 H595.5 M469 150.9 H595.5 M469 170.0 H595.5 M469 189.1 H595.5 M469 208.1 H595.5 M469 227.1 H595.5" stroke="#577478" stroke-width=".9" stroke-dasharray="1.3 1.6" fill="none"/>
<path d="M595.5 85 V241" stroke="#5a5a5a" stroke-width="1"/>
<path d="M595.5 93.8 h2" stroke="#222" stroke-width=".7"/>
<text x="598.4" y="95.7" font-size="5.4" fill="#111" font-family="Liberation Sans, sans-serif" textLength="19.6" lengthAdjust="spacingAndGlyphs">2908.00</text>
<path d="M595.5 112.8 h2" stroke="#222" stroke-width=".7"/>
<text x="598.4" y="114.8" font-size="5.4" fill="#111" font-family="Liberation Sans, sans-serif" textLength="19.6" lengthAdjust="spacingAndGlyphs">2905.50</text>
<path d="M595.5 131.9 h2" stroke="#222" stroke-width=".7"/>
<text x="598.4" y="133.8" font-size="5.4" fill="#111" font-family="Liberation Sans, sans-serif" textLength="19.6" lengthAdjust="spacingAndGlyphs">2903.00</text>
<path d="M595.5 150.9 h2" stroke="#222" stroke-width=".7"/>
<text x="598.4" y="152.8" font-size="5.4" fill="#111" font-family="Liberation Sans, sans-serif" textLength="19.6" lengthAdjust="spacingAndGlyphs">2900.50</text>
<path d="M595.5 170.0 h2" stroke="#222" stroke-width=".7"/>
<text x="598.4" y="171.9" font-size="5.4" fill="#111" font-family="Liberation Sans, sans-serif" textLength="19.6" lengthAdjust="spacingAndGlyphs">2898.00</text>
<path d="M595.5 189.1 h2" stroke="#222" stroke-width=".7"/>
<text x="598.4" y="191.0" font-size="5.4" fill="#111" font-family="Liberation Sans, sans-serif" textLength="19.6" lengthAdjust="spacingAndGlyphs">2895.50</text>
<path d="M595.5 208.1 h2" stroke="#222" stroke-width=".7"/>
<text x="598.4" y="210.0" font-size="5.4" fill="#111" font-family="Liberation Sans, sans-serif" textLength="19.6" lengthAdjust="spacingAndGlyphs">2893.00</text>
<path d="M595.5 227.1 h2" stroke="#222" stroke-width=".7"/>
<text x="598.4" y="229.0" font-size="5.4" fill="#111" font-family="Liberation Sans, sans-serif" textLength="19.6" lengthAdjust="spacingAndGlyphs">2890.50</text>
<path d="M469 204.5 L479.6 191.5 L497.6 170.4 L510 158 L518 152.4 L527 148.6 L536 146.3 L545 144.6 L557 142.8 L569 141.4 L576 141" stroke="#3a3ac0" stroke-width=".8" fill="none"/>
<path d="M469 139.6 H595.5" stroke="#6a8888" stroke-width=".8"/>
<path d="M479.4 126 V154.5" stroke="#222" stroke-width=".8"/>
<rect x="473.29999999999995" y="139.8" width="12.2" height="6.9" fill="#0a800a" stroke="#1a1a1a" stroke-width=".7"/>
<path d="M497.4 113 V153" stroke="#222" stroke-width=".8"/>
<rect x="491.29999999999995" y="122.2" width="12.2" height="19.3" fill="#0a800a" stroke="#1a1a1a" stroke-width=".7"/>
<path d="M515.3 99 V140.5" stroke="#222" stroke-width=".8"/>
<rect x="509.19999999999993" y="122.2" width="12.2" height="15.3" fill="#ff1010" stroke="#1a1a1a" stroke-width=".7"/>
<path d="M533.1 131 V151.5" stroke="#222" stroke-width=".8"/>
<rect x="527.0" y="137.2" width="12.2" height="11.5" fill="#ff1010" stroke="#1a1a1a" stroke-width=".7"/>
<path d="M551.2 146.8 V161.5" stroke="#222" stroke-width=".8"/>
<rect x="545.1" y="146.8" width="12.2" height="13.7" fill="#ff1010" stroke="#1a1a1a" stroke-width=".7"/>
<path d="M568.9 136 V160.5" stroke="#222" stroke-width=".8"/>
<rect x="562.8" y="139.8" width="12.2" height="20.7" fill="#0a800a" stroke="#1a1a1a" stroke-width=".7"/>
<path d="M469 135.5 L479.6 131.5 L497.6 124.5 L515.6 117.5 L527 139 L533.4 143 L545 152" stroke="#e86a3a" stroke-width=".7" stroke-dasharray="1.2 1.4" fill="none"/>
<path d="M497.6 121 L515.6 109.5" stroke="#2a6fd0" stroke-width=".7" stroke-dasharray="1.2 1.4" fill="none"/>
<circle cx="515.6" cy="109.5" r="1.3" fill="#1a5fd0"/>
<circle cx="515.6" cy="138.4" r="1.3" fill="#1a5fd0"/>
<circle cx="533.4" cy="151.4" r="1.3" fill="#1a5fd0"/>
<circle cx="551.3" cy="163.4" r="1.3" fill="#1a5fd0"/>
<circle cx="551.3" cy="166" r="1.3" fill="#1a5fd0"/>
<circle cx="497.6" cy="124.6" r="1.3" fill="#1a5fd0"/>
<circle cx="497.6" cy="129" r="1.3" fill="#1a5fd0"/>
<circle cx="515.6" cy="117.2" r="1.3" fill="#e04a2a"/>
<circle cx="497.6" cy="124.6" r="1.5" fill="none" stroke="#fff" stroke-width=".8"/>
<circle cx="497.6" cy="129.2" r="1.5" fill="none" stroke="#fff" stroke-width=".8"/>
<circle cx="515.6" cy="124.6" r="1.5" fill="none" stroke="#fff" stroke-width=".8"/>
<circle cx="515.6" cy="134.4" r="1.5" fill="none" stroke="#fff" stroke-width=".8"/>
<circle cx="533.4" cy="144.2" r="1.5" fill="none" stroke="#fff" stroke-width=".8"/>
<circle cx="551.3" cy="151.8" r="1.5" fill="none" stroke="#fff" stroke-width=".8"/>
<circle cx="545.4" cy="151.8" r=".9" fill="#e04a2a"/>
<rect x="596.6" y="136.4" width="23.6" height="6.4" fill="#3d5c5c"/>
<text x="598.4" y="141.5" font-size="5.4" fill="#fff" font-family="Liberation Sans, sans-serif" textLength="19.6" lengthAdjust="spacingAndGlyphs">2902.00</text>
<text x="535.4" y="93.6" font-size="5.4" fill="#000" font-family="Liberation Serif, serif" textLength="48.6" lengthAdjust="spacingAndGlyphs">VirtualTradePad Lite</text>
<circle cx="589.6" cy="92.4" r="2.6" fill="#7ab83a"/><circle cx="590.6" cy="93" r="1.5" fill="#eaf6d0"/><path d="M587 90.4 l2 -1.6 l2.2 1.2" stroke="#4a78c0" stroke-width=".9" fill="none"/>
</svg>
<div style="left:300px;top:85px;width:169px;height:156px;overflow:hidden;background:#000;">
<div style="left:4px;top:36px;width:162px;height:138px;background:radial-gradient(ellipse at 50% 45%,#19233e 0,#141d34 30%,#0a0f1d 62%,#000 88%);"></div>
<div style="left:0.4px;top:0.2px;width:168.8px;height:18.9px;border:1.2px solid #1a9bb0;border-radius:1.5px;"></div>
<div style="left:2px;top:2.6px;width:7.6px;height:5.8px;background:linear-gradient(to right,#e8a8b8 0,#d0b0e0 50%,#a8a8f0 100%);"></div>
<div style="left:11.4px;top:2.6px;width:8.2px;height:5.8px;background:linear-gradient(to right,#2840d8 0,#3a50e0 50%,#e04040 70%,#d82828 100%);"></div>
<div class="t" style="left:9px;top:4px;font-size:9.1px;line-height:12px;color:#f2f2f2;font-family:'DejaVu Sans','Liberation Sans',sans-serif;">11:12:02</div>
<svg style="left:76.6px;top:7.2px" width="15" height="6" viewBox="0 0 15 6"><path d="M3.4 0 L0.4 3 L3.4 6 Z M11.6 0 L14.6 3 L11.6 6 Z" fill="#1e8cf0"/></svg>
<div style="left:138.2px;top:4.9px;width:11.8px;height:11.8px;background:#42444c;border-radius:1.2px;"></div>
<div style="left:141.8px;top:13.6px;width:4.8px;height:1.3px;background:#d8d8dc;"></div>
<div style="left:152px;top:4.9px;width:11.8px;height:11.8px;background:#42444c;border-radius:1.2px;"></div>
<svg style="left:154.6px;top:7.6px" width="6.6" height="6.6" viewBox="0 0 6.6 6.6"><path d="M0.5 0.5 L6.1 6.1 M6.1 0.5 L0.5 6.1" stroke="#fff" stroke-width="1.35"/></svg>
<div style="left:4px;top:19.5px;width:158.4px;height:17px;border:1px solid #0f5f72;border-radius:2px;"></div>
<div class="t" style="left:12px;top:24px;font-size:7.2px;line-height:11px;color:#f0f0f0;font-family:'DejaVu Sans','Liberation Sans',sans-serif;">Позиция</div>
<div class="t" style="left:52px;top:24px;font-size:7.3px;line-height:11px;color:#14e414;font-family:'DejaVu Sans','Liberation Sans',sans-serif;">Ордер</div>
<div class="t" style="left:80px;top:24px;font-size:7.2px;line-height:11px;color:#f0f0f0;font-family:'DejaVu Sans','Liberation Sans',sans-serif;">Сигнал</div>
<div class="t" style="left:113px;top:24px;font-size:7.4px;line-height:11px;color:#f0f0f0;font-family:'DejaVu Sans','Liberation Sans',sans-serif;">Инфо</div>
<div class="t" style="left:138px;top:25px;font-size:7.0px;line-height:10px;color:#f0f0f0;font-family:'DejaVu Sans','Liberation Sans',sans-serif;">CLP</div>
<div style="left:54.6px;top:34.2px;width:14.4px;height:1.2px;background:#d8d8d8;"></div>
<div style="left:155px;top:27.2px;width:4.4px;height:3.6px;background:#ff1010;border-radius:.6px;"></div>
<div class="t" style="left:10px;top:48px;font-size:8.1px;line-height:12px;color:#f4f4f4;font-family:'DejaVu Sans','Liberation Sans',sans-serif;">Установить</div>
<div class="t" style="left:113px;top:49px;font-size:7.9px;line-height:11px;color:#f4f4f4;font-family:'DejaVu Sans','Liberation Sans',sans-serif;">Удалить</div>
<svg style="left:10px;top:58.3px" width="58" height="4" viewBox="0 0 58 4"><path d="M0.6 3.6 Q0.6 1 3 1 H55 Q57.4 1 57.4 3.6" stroke="#1e94dc" stroke-width="1.2" fill="none"/></svg>
<svg style="left:98.4px;top:58.3px" width="57.19999999999999" height="4" viewBox="0 0 57.19999999999999 4"><path d="M0.6 3.6 Q0.6 1 3 1 H54.19999999999999 Q56.59999999999999 1 56.59999999999999 3.6" stroke="#1e94dc" stroke-width="1.2" fill="none"/></svg>
<svg style="left:10px;top:126.80000000000001px" width="58" height="4" viewBox="0 0 58 4"><path d="M0.6 0.4 Q0.6 3 3 3 H55 Q57.4 3 57.4 0.4" stroke="#1e94dc" stroke-width="1.2" fill="none"/></svg>
<svg style="left:98.4px;top:126.80000000000001px" width="57.19999999999999" height="4" viewBox="0 0 57.19999999999999 4"><path d="M0.6 0.4 Q0.6 3 3 3 H54.19999999999999 Q56.59999999999999 3 56.59999999999999 0.4" stroke="#1e94dc" stroke-width="1.2" fill="none"/></svg>
<div style="left:14px;top:62.2px;width:51px;height:11.2px;background:#333333;border:0.8px solid #5a5a5a;border-radius:1.2px;"></div>
<div class="t" style="left:14px;top:62px;font-size:7.1px;line-height:11px;color:#2f9cf0;font-family:'DejaVu Sans','Liberation Sans',sans-serif;width:51px;text-align:center;">BUY STOP</div>
<div style="left:14px;top:76.4px;width:51px;height:11.2px;background:#333333;border:0.8px solid #5a5a5a;border-radius:1.2px;"></div>
<div class="t" style="left:14px;top:76px;font-size:7.1px;line-height:11px;color:#f01a1a;font-family:'DejaVu Sans','Liberation Sans',sans-serif;width:51px;text-align:center;">SELL STOP</div>
<div style="left:14px;top:100.2px;width:51px;height:11.2px;background:#333333;border:0.8px solid #5a5a5a;border-radius:1.2px;"></div>
<div class="t" style="left:14px;top:100px;font-size:7.1px;line-height:11px;color:#2f9cf0;font-family:'DejaVu Sans','Liberation Sans',sans-serif;width:51px;text-align:center;">BUY LIMIT</div>
<div style="left:14px;top:115px;width:51px;height:11.2px;background:#333333;border:0.8px solid #5a5a5a;border-radius:1.2px;"></div>
<div class="t" style="left:14px;top:115px;font-size:7.1px;line-height:11px;color:#f01a1a;font-family:'DejaVu Sans','Liberation Sans',sans-serif;width:51px;text-align:center;">SELL LIMIT</div>
<div style="left:14px;top:93.2px;width:48px;height:0.9px;background:#1c6fa8;"></div>
<div style="left:101.5px;top:62.2px;width:51px;height:11.2px;background:#333333;border:0.8px solid #5a5a5a;border-radius:1.2px;"></div>
<div class="t" style="left:101.5px;top:62px;font-size:7.1px;line-height:11px;color:#2f9cf0;font-family:'DejaVu Sans','Liberation Sans',sans-serif;width:51px;text-align:center;">BUY STOP</div>
<div style="left:101.5px;top:76.4px;width:51px;height:11.2px;background:#333333;border:0.8px solid #5a5a5a;border-radius:1.2px;"></div>
<div class="t" style="left:101.5px;top:76px;font-size:7.1px;line-height:11px;color:#f01a1a;font-family:'DejaVu Sans','Liberation Sans',sans-serif;width:51px;text-align:center;">SELL STOP</div>
<div style="left:101.5px;top:100.2px;width:51px;height:11.2px;background:#333333;border:0.8px solid #5a5a5a;border-radius:1.2px;"></div>
<div class="t" style="left:101.5px;top:100px;font-size:7.1px;line-height:11px;color:#2f9cf0;font-family:'DejaVu Sans','Liberation Sans',sans-serif;width:51px;text-align:center;">BUY LIMIT</div>
<div style="left:101.5px;top:115px;width:51px;height:11.2px;background:#333333;border:0.8px solid #5a5a5a;border-radius:1.2px;"></div>
<div class="t" style="left:101.5px;top:115px;font-size:7.1px;line-height:11px;color:#f01a1a;font-family:'DejaVu Sans','Liberation Sans',sans-serif;width:51px;text-align:center;">SELL LIMIT</div>
<div style="left:101.5px;top:93.2px;width:48px;height:0.9px;background:#1c6fa8;"></div>
<svg style="left:70.3px;top:78.3px" width="28" height="28" viewBox="0 0 28 28"><defs><radialGradient id="tg300" cx="50%" cy="40%" r="60%"><stop offset="0" stop-color="#7ab830"/><stop offset="0.75" stop-color="#4f8c14"/><stop offset="1" stop-color="#356a08"/></radialGradient></defs><circle cx="14" cy="14" r="14" fill="url(#tg300)"/><circle cx="14" cy="14" r="11.2" fill="#a9bc86"/><circle cx="14" cy="14" r="10.4" fill="#d9dfc8"/><circle cx="14" cy="14" r="7.7" fill="#3b67ac"/><circle cx="14" cy="13.6" r="6.4" fill="#5a88c8"/><circle cx="14" cy="14" r="4.9" fill="#e6eaf4"/><circle cx="14" cy="14" r="2.9" fill="#de2230"/><circle cx="14" cy="14" r="1" fill="#8a1018"/></svg>
<svg style="left:5px;top:148.6px" width="64.8" height="4" viewBox="0 0 64.8 4"><path d="M0.6 3.6 Q0.6 1 3 1 H61.8 Q64.2 1 64.2 3.6" stroke="#1e94dc" stroke-width="1.2" fill="none"/></svg>
<svg style="left:96.6px;top:148.6px" width="65.4" height="4" viewBox="0 0 65.4 4"><path d="M0.6 3.6 Q0.6 1 3 1 H62.400000000000006 Q64.80000000000001 1 64.80000000000001 3.6" stroke="#1e94dc" stroke-width="1.2" fill="none"/></svg>
<div style="left:6.2px;top:151.2px;width:10.2px;height:9px;background:#2b3038;border:0.7px solid #565a60;"></div>
<svg style="left:8.8px;top:153.4px" width="4.4" height="5" viewBox="0 0 4.4 5"><path d="M3.8 0 L0.4 2.5 L3.8 5 Z" fill="#1e8cf0"/></svg>
<div class="t" style="left:18.8px;top:152px;font-size:6.8px;line-height:10px;color:#f0f0f0;font-family:'DejaVu Sans','Liberation Sans',sans-serif;">Стоплосс</div>
<div style="left:57.8px;top:151.2px;width:11.8px;height:9px;background:#2b3038;border:0.7px solid #565a60;"></div>
<div class="t" style="left:58.4px;top:153.8px;font-size:12px;line-height:12px;color:#b4f000;font-weight:bold;">%</div>
<div style="left:98.4px;top:151.2px;width:10.4px;height:9px;background:#2b3038;border:0.7px solid #565a60;"></div>
<div class="t" style="left:111.2px;top:152px;font-size:6.9px;line-height:10px;color:#f0f0f0;font-family:'DejaVu Sans','Liberation Sans',sans-serif;">Тейкпроф</div>
<div style="left:150.2px;top:151.2px;width:11.8px;height:9px;background:#2b3038;border:0.7px solid #565a60;"></div>
<div class="t" style="left:150.8px;top:153.8px;font-size:12px;line-height:12px;color:#b4f000;font-weight:bold;">%</div>
</div>
<div style="left:630.40px;top:68.80px;width:171.00px;height:173.20px;background:#f2f2f2;border-top:1px solid #8c8c8c;border-left:0.8px solid #c0c0c0;"></div>
<svg style="left:634.6px;top:69.8px" width="9.2" height="9.2" viewBox="0 0 8 8"><rect x="0.4" y="0.4" width="6" height="5.4" fill="#eaf2ff" stroke="#3a78d0" stroke-width=".7"/><rect x="0.4" y="0.4" width="6" height="1.3" fill="#3a78d0"/><rect x="1.8" y="2.2" width="6" height="5.4" fill="#f4f8ff" stroke="#3a78d0" stroke-width=".7"/><rect x="1.8" y="2.2" width="6" height="1.3" fill="#3a78d0"/><path d="M2.8 6.4 L4.2 5 L5.4 6 L7 4.6" stroke="#e05a20" stroke-width=".7" fill="none"/></svg>
<div class="t" style="top:69px;font-size:6.3px;line-height:9px;color:#7a7a7a;letter-spacing:-0.045px;left:645.70px;">EPM20,M10</div>
<div style="left:633.20px;top:80.80px;width:168.00px;height:161.00px;background:#ffffff;border-top:0.8px solid #8a8a8a;border-left:0.8px solid #999;"></div>
<div style="left:635.20px;top:81.90px;width:165.00px;height:3.00px;background:#000;"></div>
<div style="left:635.3px;top:83px;width:164.7px;height:158.1px;overflow:hidden;background:#000;">
<div style="left:4px;top:36px;width:162px;height:138px;background:radial-gradient(ellipse at 50% 45%,#19233e 0,#141d34 30%,#0a0f1d 62%,#000 88%);"></div>
<div style="left:0.4px;top:0.2px;width:168.8px;height:18.9px;border:1.2px solid #1a9bb0;border-radius:1.5px;"></div>
<div style="left:2px;top:2.6px;width:7.6px;height:5.8px;background:linear-gradient(to right,#e8a8b8 0,#d0b0e0 50%,#a8a8f0 100%);"></div>
<div style="left:11.4px;top:2.6px;width:8.2px;height:5.8px;background:linear-gradient(to right,#2840d8 0,#3a50e0 50%,#e04040 70%,#d82828 100%);"></div>
<div class="t" style="left:9px;top:4px;font-size:9.1px;line-height:12px;color:#f2f2f2;font-family:'DejaVu Sans','Liberation Sans',sans-serif;">11:12:02</div>
<svg style="left:76.6px;top:7.2px" width="15" height="6" viewBox="0 0 15 6"><path d="M3.4 0 L0.4 3 L3.4 6 Z M11.6 0 L14.6 3 L11.6 6 Z" fill="#1e8cf0"/></svg>
<div style="left:138.2px;top:4.9px;width:11.8px;height:11.8px;background:#42444c;border-radius:1.2px;"></div>
<div style="left:141.8px;top:13.6px;width:4.8px;height:1.3px;background:#d8d8dc;"></div>
<div style="left:152px;top:4.9px;width:11.8px;height:11.8px;background:#42444c;border-radius:1.2px;"></div>
<svg style="left:154.6px;top:7.6px" width="6.6" height="6.6" viewBox="0 0 6.6 6.6"><path d="M0.5 0.5 L6.1 6.1 M6.1 0.5 L0.5 6.1" stroke="#fff" stroke-width="1.35"/></svg>
<div style="left:4px;top:19.5px;width:158.4px;height:17px;border:1px solid #0f5f72;border-radius:2px;"></div>
<div class="t" style="left:12px;top:24px;font-size:7.2px;line-height:11px;color:#f0f0f0;font-family:'DejaVu Sans','Liberation Sans',sans-serif;">Позиция</div>
<div class="t" style="left:52px;top:24px;font-size:7.3px;line-height:11px;color:#14e414;font-family:'DejaVu Sans','Liberation Sans',sans-serif;">Ордер</div>
<div class="t" style="left:80px;top:24px;font-size:7.2px;line-height:11px;color:#f0f0f0;font-family:'DejaVu Sans','Liberation Sans',sans-serif;">Сигнал</div>
<div class="t" style="left:113px;top:24px;font-size:7.4px;line-height:11px;color:#f0f0f0;font-family:'DejaVu Sans','Liberation Sans',sans-serif;">Инфо</div>
<div class="t" style="left:138px;top:25px;font-size:7.0px;line-height:10px;color:#f0f0f0;font-family:'DejaVu Sans','Liberation Sans',sans-serif;">CLP</div>
<div style="left:54.6px;top:34.2px;width:14.4px;height:1.2px;background:#d8d8d8;"></div>
<div style="left:155px;top:27.2px;width:4.4px;height:3.6px;background:#ff1010;border-radius:.6px;"></div>
<div class="t" style="left:10px;top:48px;font-size:8.1px;line-height:12px;color:#f4f4f4;font-family:'DejaVu Sans','Liberation Sans',sans-serif;">Установить</div>
<div class="t" style="left:113px;top:49px;font-size:7.9px;line-height:11px;color:#f4f4f4;font-family:'DejaVu Sans','Liberation Sans',sans-serif;">Удалить</div>
<svg style="left:10px;top:58.3px" width="58" height="4" viewBox="0 0 58 4"><path d="M0.6 3.6 Q0.6 1 3 1 H55 Q57.4 1 57.4 3.6" stroke="#1e94dc" stroke-width="1.2" fill="none"/></svg>
<svg style="left:98.4px;top:58.3px" width="57.19999999999999" height="4" viewBox="0 0 57.19999999999999 4"><path d="M0.6 3.6 Q0.6 1 3 1 H54.19999999999999 Q56.59999999999999 1 56.59999999999999 3.6" stroke="#1e94dc" stroke-width="1.2" fill="none"/></svg>
<svg style="left:10px;top:126.80000000000001px" width="58" height="4" viewBox="0 0 58 4"><path d="M0.6 0.4 Q0.6 3 3 3 H55 Q57.4 3 57.4 0.4" stroke="#1e94dc" stroke-width="1.2" fill="none"/></svg>
<svg style="left:98.4px;top:126.80000000000001px" width="57.19999999999999" height="4" viewBox="0 0 57.19999999999999 4"><path d="M0.6 0.4 Q0.6 3 3 3 H54.19999999999999 Q56.59999999999999 3 56.59999999999999 0.4" stroke="#1e94dc" stroke-width="1.2" fill="none"/></svg>
<div style="left:14px;top:62.2px;width:51px;height:11.2px;background:#333333;border:0.8px solid #5a5a5a;border-radius:1.2px;"></div>
<div class="t" style="left:14px;top:62px;font-size:7.1px;line-height:11px;color:#2f9cf0;font-family:'DejaVu Sans','Liberation Sans',sans-serif;width:51px;text-align:center;">BUY STOP</div>
<div style="left:14px;top:76.4px;width:51px;height:11.2px;background:#333333;border:0.8px solid #5a5a5a;border-radius:1.2px;"></div>
<div class="t" style="left:14px;top:76px;font-size:7.1px;line-height:11px;color:#f01a1a;font-family:'DejaVu Sans','Liberation Sans',sans-serif;width:51px;text-align:center;">SELL STOP</div>
<div style="left:14px;top:100.2px;width:51px;height:11.2px;background:#333333;border:0.8px solid #5a5a5a;border-radius:1.2px;"></div>
<div class="t" style="left:14px;top:100px;font-size:7.1px;line-height:11px;color:#2f9cf0;font-family:'DejaVu Sans','Liberation Sans',sans-serif;width:51px;text-align:center;">BUY LIMIT</div>
<div style="left:14px;top:115px;width:51px;height:11.2px;background:#333333;border:0.8px solid #5a5a5a;border-radius:1.2px;"></div>
<div class="t" style="left:14px;top:115px;font-size:7.1px;line-height:11px;color:#f01a1a;font-family:'DejaVu Sans','Liberation Sans',sans-serif;width:51px;text-align:center;">SELL LIMIT</div>
<div style="left:14px;top:93.2px;width:48px;height:0.9px;background:#1c6fa8;"></div>
<div style="left:101.5px;top:62.2px;width:51px;height:11.2px;background:#333333;border:0.8px solid #5a5a5a;border-radius:1.2px;"></div>
<div class="t" style="left:101.5px;top:62px;font-size:7.1px;line-height:11px;color:#2f9cf0;font-family:'DejaVu Sans','Liberation Sans',sans-serif;width:51px;text-align:center;">BUY STOP</div>
<div style="left:101.5px;top:76.4px;width:51px;height:11.2px;background:#333333;border:0.8px solid #5a5a5a;border-radius:1.2px;"></div>
<div class="t" style="left:101.5px;top:76px;font-size:7.1px;line-height:11px;color:#f01a1a;font-family:'DejaVu Sans','Liberation Sans',sans-serif;width:51px;text-align:center;">SELL STOP</div>
<div style="left:101.5px;top:100.2px;width:51px;height:11.2px;background:#333333;border:0.8px solid #5a5a5a;border-radius:1.2px;"></div>
<div class="t" style="left:101.5px;top:100px;font-size:7.1px;line-height:11px;color:#2f9cf0;font-family:'DejaVu Sans','Liberation Sans',sans-serif;width:51px;text-align:center;">BUY LIMIT</div>
<div style="left:101.5px;top:115px;width:51px;height:11.2px;background:#333333;border:0.8px solid #5a5a5a;border-radius:1.2px;"></div>
<div class="t" style="left:101.5px;top:115px;font-size:7.1px;line-height:11px;color:#f01a1a;font-family:'DejaVu Sans','Liberation Sans',sans-serif;width:51px;text-align:center;">SELL LIMIT</div>
<div style="left:101.5px;top:93.2px;width:48px;height:0.9px;background:#1c6fa8;"></div>
<svg style="left:70.3px;top:78.3px" width="28" height="28" viewBox="0 0 28 28"><defs><radialGradient id="tg635" cx="50%" cy="40%" r="60%"><stop offset="0" stop-color="#7ab830"/><stop offset="0.75" stop-color="#4f8c14"/><stop offset="1" stop-color="#356a08"/></radialGradient></defs><circle cx="14" cy="14" r="14" fill="url(#tg635)"/><circle cx="14" cy="14" r="11.2" fill="#a9bc86"/><circle cx="14" cy="14" r="10.4" fill="#d9dfc8"/><circle cx="14" cy="14" r="7.7" fill="#3b67ac"/><circle cx="14" cy="13.6" r="6.4" fill="#5a88c8"/><circle cx="14" cy="14" r="4.9" fill="#e6eaf4"/><circle cx="14" cy="14" r="2.9" fill="#de2230"/><circle cx="14" cy="14" r="1" fill="#8a1018"/></svg>
<svg style="left:5px;top:149.6px" width="64.8" height="4" viewBox="0 0 64.8 4"><path d="M0.6 3.6 Q0.6 1 3 1 H61.8 Q64.2 1 64.2 3.6" stroke="#1e94dc" stroke-width="1.2" fill="none"/></svg>
<svg style="left:96.6px;top:149.6px" width="65.4" height="4" viewBox="0 0 65.4 4"><path d="M0.6 3.6 Q0.6 1 3 1 H62.400000000000006 Q64.80000000000001 1 64.80000000000001 3.6" stroke="#1e94dc" stroke-width="1.2" fill="none"/></svg>
<div style="left:6.2px;top:152.2px;width:10.2px;height:9px;background:#2b3038;border:0.7px solid #565a60;"></div>
<div class="t" style="left:18.8px;top:153px;font-size:6.8px;line-height:10px;color:#f0f0f0;font-family:'DejaVu Sans','Liberation Sans',sans-serif;">Стоплосс</div>
<div style="left:57.8px;top:152.2px;width:11.8px;height:9px;background:#2b3038;border:0.7px solid #565a60;"></div>
<div class="t" style="left:58.4px;top:154.8px;font-size:12px;line-height:12px;color:#b4f000;font-weight:bold;">%</div>
<div style="left:98.4px;top:152.2px;width:10.4px;height:9px;background:#2b3038;border:0.7px solid #565a60;"></div>
<div class="t" style="left:111.2px;top:153px;font-size:6.9px;line-height:10px;color:#f0f0f0;font-family:'DejaVu Sans','Liberation Sans',sans-serif;">Тейкпроф</div>
<div style="left:150.2px;top:152.2px;width:11.8px;height:9px;background:#2b3038;border:0.7px solid #565a60;"></div>
<div class="t" style="left:150.8px;top:154.8px;font-size:12px;line-height:12px;color:#b4f000;font-weight:bold;">%</div>
</div>
<div style="left:297.00px;top:241.00px;width:503.00px;height:0.90px;background:#5a5a5a;"></div>
<div style="left:297.00px;top:241.90px;width:503.00px;height:13.20px;background:#f3f3f3;"></div>
<div class="t" style="top:244px;font-size:6.3px;line-height:9px;color:#7c7c7c;letter-spacing:0.066px;left:305.80px;">MESM20,M10</div>
<div class="t" style="top:244px;font-size:6.3px;line-height:9px;color:#7c7c7c;letter-spacing:-0.057px;left:359.80px;">EPM20,M10</div>
<div class="t" style="top:244px;font-size:6.3px;line-height:9px;color:#7c7c7c;letter-spacing:0.066px;left:407.50px;">MESM20,M10</div>
<div style="left:353.00px;top:244.40px;width:0.80px;height:7.00px;background:#9a9a9a;"></div>
<div style="left:400.80px;top:244.40px;width:0.80px;height:7.00px;background:#9a9a9a;"></div>
<div style="left:455.60px;top:241.00px;width:47.60px;height:12.60px;background:#ffffff;border:0.8px solid #555;border-top:none;box-shadow:0.6px 0.6px 0 #999;"></div>
<div class="t" style="top:244px;font-size:6.3px;line-height:9px;color:#111;letter-spacing:-0.045px;left:462.00px;">EPM20,M10</div>
<svg style="left:780.8px;top:246px" width="2.6" height="4" viewBox="0 0 2.6 4"><path d="M2.4 0.2 L0.2 2 L2.4 3.8 Z" fill="#a6a6a6"/></svg>
<svg style="left:792.8px;top:246px" width="2.6" height="4" viewBox="0 0 2.6 4"><path d="M0.2 0.2 L2.4 2 L0.2 3.8 Z" fill="#a6a6a6"/></svg>
<!-- ===== Toolbox: trade history ===== -->
<div style="left:198.00px;top:254.30px;width:602.00px;height:195.00px;background:#f0f0f0;"></div>
<div style="left:199.6px;top:257px;width:6.6px;height:192px;background:linear-gradient(to top,#c3d7ee 0,#cbddf1 45px,#d6e3f2 110px,#dde8f4 192px);"></div>
<svg style="left:200.8px;top:257.4px" width="3.4" height="3.4" viewBox="0 0 3.4 3.4"><path d="M0.3 0.3 L3.1 3.1 M3.1 0.3 L0.3 3.1" stroke="#111" stroke-width=".9"/></svg>
<div class="t" style="left:198.8px;top:421.6px;width:8px;font-size:6.2px;line-height:8px;color:#16243c;writing-mode:vertical-rl;transform:rotate(180deg);">Инструменты</div>
<div style="left:206.20px;top:256.20px;width:585.00px;height:181.20px;background:#ffffff;border-left:0.8px solid #a0a0a0;border-top:0.9px solid #bdbdbd;"></div>
<div style="left:198.00px;top:252.00px;width:99.00px;height:0.70px;background:#dcdcdc;"></div>
<div style="left:206.90px;top:257.70px;width:584.00px;height:11.40px;background:#ffffff;"></div>
<div style="left:206.90px;top:268.90px;width:584.00px;height:0.70px;background:#e4e4e4;"></div>
<div style="left:206.90px;top:269.40px;width:584.00px;height:11.20px;background:#e2effb;"></div>
<div style="left:206.90px;top:280.60px;width:584.00px;height:11.20px;background:#ececec;"></div>
<div style="left:206.90px;top:291.80px;width:584.00px;height:11.20px;background:#ffffff;"></div>
<div style="left:206.90px;top:303.00px;width:584.00px;height:11.20px;background:#ececec;"></div>
<div style="left:206.90px;top:314.20px;width:584.00px;height:11.20px;background:#ffffff;"></div>
<div style="left:206.90px;top:325.40px;width:584.00px;height:11.20px;background:#ececec;"></div>
<div style="left:206.90px;top:336.60px;width:584.00px;height:11.20px;background:#ffffff;"></div>
<div style="left:206.90px;top:347.80px;width:584.00px;height:11.20px;background:#ececec;"></div>
<div style="left:206.90px;top:359.00px;width:584.00px;height:11.20px;background:#ffffff;"></div>
<div style="left:206.90px;top:370.20px;width:584.00px;height:11.20px;background:#ececec;"></div>
<div style="left:206.90px;top:381.40px;width:584.00px;height:11.20px;background:#ffffff;"></div>
<div style="left:206.90px;top:392.60px;width:584.00px;height:11.20px;background:#ececec;"></div>
<div style="left:206.90px;top:403.80px;width:584.00px;height:11.20px;background:#ffffff;"></div>
<div style="left:206.90px;top:415.00px;width:584.00px;height:11.20px;background:#ececec;"></div>
<div style="left:206.90px;top:426.20px;width:584.00px;height:11.40px;background:#cbcbcb;"></div>
<div style="left:285.80px;top:257.70px;width:0.70px;height:168.50px;background:rgba(120,120,120,.16);"></div>
<div style="left:320.00px;top:257.70px;width:0.70px;height:168.50px;background:rgba(120,120,120,.16);"></div>
<div style="left:354.10px;top:257.70px;width:0.70px;height:168.50px;background:rgba(120,120,120,.16);"></div>
<div style="left:392.10px;top:257.70px;width:0.70px;height:168.50px;background:rgba(120,120,120,.16);"></div>
<div style="left:422.30px;top:257.70px;width:0.70px;height:168.50px;background:rgba(120,120,120,.16);"></div>
<div style="left:461.50px;top:257.70px;width:0.70px;height:168.50px;background:rgba(120,120,120,.16);"></div>
<div style="left:511.00px;top:257.70px;width:0.70px;height:168.50px;background:rgba(120,120,120,.16);"></div>
<div style="left:560.10px;top:257.70px;width:0.70px;height:168.50px;background:rgba(120,120,120,.16);"></div>
<div style="left:609.20px;top:257.70px;width:0.70px;height:168.50px;background:rgba(120,120,120,.16);"></div>
<div style="left:658.30px;top:257.70px;width:0.70px;height:168.50px;background:rgba(120,120,120,.16);"></div>
<div style="left:697.90px;top:257.70px;width:0.70px;height:168.50px;background:rgba(120,120,120,.16);"></div>
<div style="left:737.00px;top:257.70px;width:0.70px;height:168.50px;background:rgba(120,120,120,.16);"></div>
<div class="t" style="top:259px;font-size:6.6px;line-height:9px;color:#1c1c1c;letter-spacing:-0.111px;left:210.60px;">Время</div>
<div class="t" style="top:259px;font-size:6.6px;line-height:9px;color:#1c1c1c;letter-spacing:-0.042px;right:482.44px;">Сделка</div>
<div class="t" style="top:259px;font-size:6.6px;line-height:9px;color:#1c1c1c;letter-spacing:-0.057px;right:448.06px;">Ордер</div>
<div class="t" style="top:259px;font-size:6.6px;line-height:9px;color:#1c1c1c;letter-spacing:0.044px;right:409.96px;">Символ</div>
<div class="t" style="top:259px;font-size:6.6px;line-height:9px;color:#1c1c1c;letter-spacing:-0.200px;right:379.40px;">Тип</div>
<div class="t" style="top:259px;font-size:6.6px;line-height:9px;color:#1c1c1c;letter-spacing:0.174px;right:339.43px;">Направл...</div>
<div class="t" style="top:259px;font-size:6.6px;line-height:9px;color:#1c1c1c;letter-spacing:0.246px;right:290.35px;">Объем</div>
<div class="t" style="top:259px;font-size:6.6px;line-height:9px;color:#1c1c1c;letter-spacing:-0.086px;right:242.09px;">Цена</div>
<div class="t" style="top:259px;font-size:6.6px;line-height:9px;color:#1c1c1c;letter-spacing:0.109px;right:192.09px;">S / L</div>
<div class="t" style="top:259px;font-size:6.6px;line-height:9px;color:#1c1c1c;letter-spacing:-0.103px;right:144.50px;">T / P</div>
<div class="t" style="top:259px;font-size:6.6px;line-height:9px;color:#1c1c1c;letter-spacing:0.203px;right:104.00px;">Комиссия</div>
<div class="t" style="top:259px;font-size:6.6px;line-height:9px;color:#1c1c1c;letter-spacing:-0.012px;right:65.61px;">Своп</div>
<div class="t" style="top:259px;font-size:6.6px;line-height:9px;color:#1c1c1c;letter-spacing:0.152px;left:745.00px;">Прибыль</div>
<svg style="left:781.6px;top:262px" width="4.2" height="2.6" viewBox="0 0 4.2 2.6"><path d="M0 2.6 L2.1 0 L4.2 2.6 Z" fill="#222"/></svg>
<svg style="left:208.1px;top:271.1px" width="6.2" height="8" viewBox="0 0 6.2 8"><path d="M0.5 0.5 H5.6 V5.8 L3.9 7.5 H0.5 Z" fill="#fff" stroke="#2a6fd0" stroke-width=".9"/><path d="M0.9 4.6 H5.2 V5.6 L3.7 7.1 H0.9 Z" fill="#d6e8fb"/><path d="M2.2 1.4 V4 M2.2 2.6 H4.6" stroke="#2a6fd0" stroke-width="1" fill="none"/></svg>
<div class="t" style="top:271px;font-size:6.4px;line-height:9px;color:#1c1c1c;letter-spacing:-0.191px;left:219.30px;">2020.04.28 10:01:12</div>
<div class="t" style="top:271px;font-size:6.4px;line-height:9px;color:#1c1c1c;letter-spacing:-0.262px;right:481.86px;">36960220</div>
<div class="t" style="top:271px;font-size:6.4px;line-height:9px;color:#1c1c1c;letter-spacing:-0.262px;right:447.66px;">51673995</div>
<div class="t" style="top:271px;font-size:6.4px;line-height:9px;color:#1c1c1c;letter-spacing:-0.237px;right:410.04px;">epm20</div>
<div class="t" style="top:271px;font-size:6.4px;line-height:9px;color:#1c1c1c;letter-spacing:0.244px;right:378.96px;">buy</div>
<div class="t" style="top:271px;font-size:6.4px;line-height:9px;color:#1c1c1c;letter-spacing:0.255px;right:339.75px;">out</div>
<div class="t" style="top:271px;font-size:6.4px;line-height:9px;color:#1c1c1c;letter-spacing:-0.284px;right:291.08px;">1.00</div>
<div class="t" style="top:271px;font-size:6.4px;line-height:9px;color:#1c1c1c;letter-spacing:-0.252px;right:242.05px;">2903.75</div>
<div class="t" style="top:271px;font-size:6.4px;line-height:9px;color:#1c1c1c;letter-spacing:-0.252px;right:192.45px;">2906.75</div>
<div class="t" style="top:271px;font-size:6.4px;line-height:9px;color:#1c1c1c;letter-spacing:0.005px;right:103.59px;">-1.85</div>
<div class="t" style="top:271px;font-size:6.4px;line-height:9px;color:#1c1c1c;letter-spacing:-0.150px;right:11.95px;">50.00</div>
<svg style="left:208.1px;top:282.3px" width="6.2" height="8" viewBox="0 0 6.2 8"><path d="M0.5 0.5 H5.6 V5.8 L3.9 7.5 H0.5 Z" fill="#fff" stroke="#e04a1a" stroke-width=".9"/><path d="M0.9 4.6 H5.2 V5.6 L3.7 7.1 H0.9 Z" fill="#fbe0d4"/><path d="M2.2 1.4 V4 M2.2 2.6 H4.6" stroke="#e04a1a" stroke-width="1" fill="none"/></svg>
<div class="t" style="top:282px;font-size:6.4px;line-height:9px;color:#1c1c1c;letter-spacing:-0.191px;left:219.30px;">2020.04.28 10:02:32</div>
<div class="t" style="top:282px;font-size:6.4px;line-height:9px;color:#1c1c1c;letter-spacing:-0.262px;right:481.86px;">36960313</div>
<div class="t" style="top:282px;font-size:6.4px;line-height:9px;color:#1c1c1c;letter-spacing:-0.262px;right:447.66px;">51674153</div>
<div class="t" style="top:282px;font-size:6.4px;line-height:9px;color:#1c1c1c;letter-spacing:-0.237px;right:410.04px;">epm20</div>
<div class="t" style="top:282px;font-size:6.4px;line-height:9px;color:#1c1c1c;letter-spacing:-0.198px;right:379.40px;">sell</div>
<div class="t" style="top:282px;font-size:6.4px;line-height:9px;color:#1c1c1c;letter-spacing:0.255px;right:339.75px;">out</div>
<div class="t" style="top:282px;font-size:6.4px;line-height:9px;color:#1c1c1c;letter-spacing:-0.284px;right:291.08px;">1.00</div>
<div class="t" style="top:282px;font-size:6.4px;line-height:9px;color:#1c1c1c;letter-spacing:-0.252px;right:242.05px;">2905.75</div>
<div class="t" style="top:282px;font-size:6.4px;line-height:9px;color:#1c1c1c;letter-spacing:-0.252px;right:192.45px;">2902.75</div>
<div class="t" style="top:282px;font-size:6.4px;line-height:9px;color:#1c1c1c;letter-spacing:0.005px;right:103.59px;">-1.85</div>
<div class="t" style="top:282px;font-size:6.4px;line-height:9px;color:#1c1c1c;letter-spacing:-0.150px;right:11.95px;">50.00</div>
<svg style="left:208.1px;top:293.5px" width="6.2" height="8" viewBox="0 0 6.2 8"><path d="M0.5 0.5 H5.6 V5.8 L3.9 7.5 H0.5 Z" fill="#fff" stroke="#e04a1a" stroke-width=".9"/><path d="M0.9 4.6 H5.2 V5.6 L3.7 7.1 H0.9 Z" fill="#fbe0d4"/><path d="M2.2 1.4 V4 M2.2 2.6 H4.6" stroke="#e04a1a" stroke-width="1" fill="none"/></svg>
<div class="t" style="top:293px;font-size:6.4px;line-height:9px;color:#1c1c1c;letter-spacing:-0.191px;left:219.30px;">2020.04.28 09:39:10</div>
<div class="t" style="top:293px;font-size:6.4px;line-height:9px;color:#1c1c1c;letter-spacing:-0.262px;right:481.86px;">36958952</div>
<div class="t" style="top:293px;font-size:6.4px;line-height:9px;color:#1c1c1c;letter-spacing:-0.262px;right:447.66px;">51671980</div>
<div class="t" style="top:293px;font-size:6.4px;line-height:9px;color:#1c1c1c;letter-spacing:-0.237px;right:410.04px;">epm20</div>
<div class="t" style="top:293px;font-size:6.4px;line-height:9px;color:#1c1c1c;letter-spacing:-0.198px;right:379.40px;">sell</div>
<div class="t" style="top:293px;font-size:6.4px;line-height:9px;color:#1c1c1c;letter-spacing:0.255px;right:339.75px;">out</div>
<div class="t" style="top:293px;font-size:6.4px;line-height:9px;color:#1c1c1c;letter-spacing:-0.284px;right:291.08px;">1.00</div>
<div class="t" style="top:293px;font-size:6.4px;line-height:9px;color:#1c1c1c;letter-spacing:-0.252px;right:242.05px;">2898.50</div>
<div class="t" style="top:293px;font-size:6.4px;line-height:9px;color:#1c1c1c;letter-spacing:-0.252px;right:192.45px;">2895.25</div>
<div class="t" style="top:293px;font-size:6.4px;line-height:9px;color:#1c1c1c;letter-spacing:0.005px;right:103.59px;">-1.85</div>
<div class="t" style="top:293px;font-size:6.4px;line-height:9px;color:#1c1c1c;letter-spacing:-0.150px;right:11.95px;">62.50</div>
<svg style="left:208.1px;top:304.70000000000005px" width="6.2" height="8" viewBox="0 0 6.2 8"><path d="M0.5 0.5 H5.6 V5.8 L3.9 7.5 H0.5 Z" fill="#fff" stroke="#2a6fd0" stroke-width=".9"/><path d="M0.9 4.6 H5.2 V5.6 L3.7 7.1 H0.9 Z" fill="#d6e8fb"/><path d="M2.2 1.4 V4 M2.2 2.6 H4.6" stroke="#2a6fd0" stroke-width="1" fill="none"/></svg>
<div class="t" style="top:304px;font-size:6.4px;line-height:9px;color:#1c1c1c;letter-spacing:-0.191px;left:219.30px;">2020.04.28 09:42:51</div>
<div class="t" style="top:304px;font-size:6.4px;line-height:9px;color:#1c1c1c;letter-spacing:-0.262px;right:481.86px;">36959147</div>
<div class="t" style="top:304px;font-size:6.4px;line-height:9px;color:#1c1c1c;letter-spacing:-0.262px;right:447.66px;">51672255</div>
<div class="t" style="top:304px;font-size:6.4px;line-height:9px;color:#1c1c1c;letter-spacing:-0.237px;right:410.04px;">epm20</div>
<div class="t" style="top:304px;font-size:6.4px;line-height:9px;color:#1c1c1c;letter-spacing:0.244px;right:378.96px;">buy</div>
<div class="t" style="top:304px;font-size:6.4px;line-height:9px;color:#1c1c1c;letter-spacing:0.255px;right:339.75px;">out</div>
<div class="t" style="top:304px;font-size:6.4px;line-height:9px;color:#1c1c1c;letter-spacing:-0.284px;right:291.08px;">1.00</div>
<div class="t" style="top:304px;font-size:6.4px;line-height:9px;color:#1c1c1c;letter-spacing:-0.252px;right:242.05px;">2897.75</div>
<div class="t" style="top:304px;font-size:6.4px;line-height:9px;color:#1c1c1c;letter-spacing:-0.252px;right:192.45px;">2900.75</div>
<div class="t" style="top:304px;font-size:6.4px;line-height:9px;color:#1c1c1c;letter-spacing:0.005px;right:103.59px;">-1.85</div>
<div class="t" style="top:304px;font-size:6.4px;line-height:9px;color:#1c1c1c;letter-spacing:-0.150px;right:11.95px;">62.50</div>
<svg style="left:208.1px;top:315.90000000000003px" width="6.2" height="8" viewBox="0 0 6.2 8"><path d="M0.5 0.5 H5.6 V5.8 L3.9 7.5 H0.5 Z" fill="#fff" stroke="#e04a1a" stroke-width=".9"/><path d="M0.9 4.6 H5.2 V5.6 L3.7 7.1 H0.9 Z" fill="#fbe0d4"/><path d="M2.2 1.4 V4 M2.2 2.6 H4.6" stroke="#e04a1a" stroke-width="1" fill="none"/></svg>
<div class="t" style="top:315px;font-size:6.4px;line-height:9px;color:#1c1c1c;letter-spacing:-0.191px;left:219.30px;">2020.04.28 10:41:19</div>
<div class="t" style="top:315px;font-size:6.4px;line-height:9px;color:#1c1c1c;letter-spacing:-0.262px;right:481.86px;">36961983</div>
<div class="t" style="top:315px;font-size:6.4px;line-height:9px;color:#1c1c1c;letter-spacing:-0.262px;right:447.66px;">51677661</div>
<div class="t" style="top:315px;font-size:6.4px;line-height:9px;color:#1c1c1c;letter-spacing:-0.237px;right:410.04px;">epm20</div>
<div class="t" style="top:315px;font-size:6.4px;line-height:9px;color:#1c1c1c;letter-spacing:-0.198px;right:379.40px;">sell</div>
<div class="t" style="top:315px;font-size:6.4px;line-height:9px;color:#1c1c1c;letter-spacing:0.255px;right:339.75px;">out</div>
<div class="t" style="top:315px;font-size:6.4px;line-height:9px;color:#1c1c1c;letter-spacing:-0.284px;right:291.08px;">1.00</div>
<div class="t" style="top:315px;font-size:6.4px;line-height:9px;color:#1c1c1c;letter-spacing:-0.252px;right:242.05px;">2905.50</div>
<div class="t" style="top:315px;font-size:6.4px;line-height:9px;color:#1c1c1c;letter-spacing:-0.252px;right:192.45px;">2902.25</div>
<div class="t" style="top:315px;font-size:6.4px;line-height:9px;color:#1c1c1c;letter-spacing:0.005px;right:103.59px;">-1.85</div>
<div class="t" style="top:315px;font-size:6.4px;line-height:9px;color:#1c1c1c;letter-spacing:-0.150px;right:11.95px;">62.50</div>
<svg style="left:208.1px;top:327.1px" width="6.2" height="8" viewBox="0 0 6.2 8"><path d="M0.5 0.5 H5.6 V5.8 L3.9 7.5 H0.5 Z" fill="#fff" stroke="#2a6fd0" stroke-width=".9"/><path d="M0.9 4.6 H5.2 V5.6 L3.7 7.1 H0.9 Z" fill="#d6e8fb"/><path d="M2.2 1.4 V4 M2.2 2.6 H4.6" stroke="#2a6fd0" stroke-width="1" fill="none"/></svg>
<div class="t" style="top:327px;font-size:6.4px;line-height:9px;color:#1c1c1c;letter-spacing:-0.191px;left:219.30px;">2020.04.28 10:49:18</div>
<div class="t" style="top:327px;font-size:6.4px;line-height:9px;color:#1c1c1c;letter-spacing:-0.262px;right:481.86px;">36962352</div>
<div class="t" style="top:327px;font-size:6.4px;line-height:9px;color:#1c1c1c;letter-spacing:-0.262px;right:447.66px;">51678463</div>
<div class="t" style="top:327px;font-size:6.4px;line-height:9px;color:#1c1c1c;letter-spacing:-0.237px;right:410.04px;">epm20</div>
<div class="t" style="top:327px;font-size:6.4px;line-height:9px;color:#1c1c1c;letter-spacing:0.244px;right:378.96px;">buy</div>
<div class="t" style="top:327px;font-size:6.4px;line-height:9px;color:#1c1c1c;letter-spacing:0.255px;right:339.75px;">out</div>
<div class="t" style="top:327px;font-size:6.4px;line-height:9px;color:#1c1c1c;letter-spacing:-0.284px;right:291.08px;">1.00</div>
<div class="t" style="top:327px;font-size:6.4px;line-height:9px;color:#1c1c1c;letter-spacing:-0.252px;right:242.05px;">2902.50</div>
<div class="t" style="top:327px;font-size:6.4px;line-height:9px;color:#1c1c1c;letter-spacing:-0.252px;right:192.45px;">2905.75</div>
<div class="t" style="top:327px;font-size:6.4px;line-height:9px;color:#1c1c1c;letter-spacing:0.005px;right:103.59px;">-1.85</div>
<div class="t" style="top:327px;font-size:6.4px;line-height:9px;color:#1c1c1c;letter-spacing:-0.150px;right:11.95px;">62.50</div>
<svg style="left:208.1px;top:338.3px" width="6.2" height="8" viewBox="0 0 6.2 8"><path d="M0.5 0.5 H5.6 V5.8 L3.9 7.5 H0.5 Z" fill="#fff" stroke="#2a6fd0" stroke-width=".9"/><path d="M0.9 4.6 H5.2 V5.6 L3.7 7.1 H0.9 Z" fill="#d6e8fb"/><path d="M2.2 1.4 V4 M2.2 2.6 H4.6" stroke="#2a6fd0" stroke-width="1" fill="none"/></svg>
<div class="t" style="top:338px;font-size:6.4px;line-height:9px;color:#1c1c1c;letter-spacing:-0.165px;left:219.30px;">2020.04.28 11:02:52</div>
<div class="t" style="top:338px;font-size:6.4px;line-height:9px;color:#1c1c1c;letter-spacing:-0.262px;right:481.86px;">36962857</div>
<div class="t" style="top:338px;font-size:6.4px;line-height:9px;color:#1c1c1c;letter-spacing:-0.262px;right:447.66px;">51679350</div>
<div class="t" style="top:338px;font-size:6.4px;line-height:9px;color:#1c1c1c;letter-spacing:-0.237px;right:410.04px;">epm20</div>
<div class="t" style="top:338px;font-size:6.4px;line-height:9px;color:#1c1c1c;letter-spacing:0.244px;right:378.96px;">buy</div>
<div class="t" style="top:338px;font-size:6.4px;line-height:9px;color:#1c1c1c;letter-spacing:0.255px;right:339.75px;">out</div>
<div class="t" style="top:338px;font-size:6.4px;line-height:9px;color:#1c1c1c;letter-spacing:-0.284px;right:291.08px;">1.00</div>
<div class="t" style="top:338px;font-size:6.4px;line-height:9px;color:#1c1c1c;letter-spacing:-0.252px;right:242.05px;">2898.75</div>
<div class="t" style="top:338px;font-size:6.4px;line-height:9px;color:#1c1c1c;letter-spacing:-0.252px;right:192.45px;">2902.00</div>
<div class="t" style="top:338px;font-size:6.4px;line-height:9px;color:#1c1c1c;letter-spacing:0.005px;right:103.59px;">-1.85</div>
<div class="t" style="top:338px;font-size:6.4px;line-height:9px;color:#1c1c1c;letter-spacing:-0.150px;right:11.95px;">62.50</div>
<svg style="left:208.1px;top:349.5px" width="6.2" height="8" viewBox="0 0 6.2 8"><path d="M0.5 0.5 H5.6 V5.8 L3.9 7.5 H0.5 Z" fill="#fff" stroke="#e04a1a" stroke-width=".9"/><path d="M0.9 4.6 H5.2 V5.6 L3.7 7.1 H0.9 Z" fill="#fbe0d4"/><path d="M2.2 1.4 V4 M2.2 2.6 H4.6" stroke="#e04a1a" stroke-width="1" fill="none"/></svg>
<div class="t" style="top:349px;font-size:6.4px;line-height:9px;color:#1c1c1c;letter-spacing:-0.191px;left:219.30px;">2020.04.28 09:14:36</div>
<div class="t" style="top:349px;font-size:6.4px;line-height:9px;color:#1c1c1c;letter-spacing:-0.262px;right:481.86px;">36956949</div>
<div class="t" style="top:349px;font-size:6.4px;line-height:9px;color:#1c1c1c;letter-spacing:-0.262px;right:447.66px;">51669012</div>
<div class="t" style="top:349px;font-size:6.4px;line-height:9px;color:#1c1c1c;letter-spacing:-0.237px;right:410.04px;">epm20</div>
<div class="t" style="top:349px;font-size:6.4px;line-height:9px;color:#1c1c1c;letter-spacing:-0.198px;right:379.40px;">sell</div>
<div class="t" style="top:349px;font-size:6.4px;line-height:9px;color:#1c1c1c;letter-spacing:0.255px;right:339.75px;">out</div>
<div class="t" style="top:349px;font-size:6.4px;line-height:9px;color:#1c1c1c;letter-spacing:-0.284px;right:291.08px;">1.00</div>
<div class="t" style="top:349px;font-size:6.4px;line-height:9px;color:#1c1c1c;letter-spacing:-0.252px;right:242.05px;">2881.25</div>
<div class="t" style="top:349px;font-size:6.4px;line-height:9px;color:#1c1c1c;letter-spacing:-0.252px;right:192.45px;">2877.75</div>
<div class="t" style="top:349px;font-size:6.4px;line-height:9px;color:#1c1c1c;letter-spacing:0.005px;right:103.59px;">-1.85</div>
<div class="t" style="top:349px;font-size:6.4px;line-height:9px;color:#1c1c1c;letter-spacing:-0.150px;right:11.95px;">75.00</div>
<svg style="left:208.1px;top:360.70000000000005px" width="6.2" height="8" viewBox="0 0 6.2 8"><path d="M0.5 0.5 H5.6 V5.8 L3.9 7.5 H0.5 Z" fill="#fff" stroke="#e04a1a" stroke-width=".9"/><path d="M0.9 4.6 H5.2 V5.6 L3.7 7.1 H0.9 Z" fill="#fbe0d4"/><path d="M2.2 1.4 V4 M2.2 2.6 H4.6" stroke="#e04a1a" stroke-width="1" fill="none"/></svg>
<div class="t" style="top:360px;font-size:6.4px;line-height:9px;color:#1c1c1c;letter-spacing:-0.191px;left:219.30px;">2020.04.28 09:19:17</div>
<div class="t" style="top:360px;font-size:6.4px;line-height:9px;color:#1c1c1c;letter-spacing:-0.262px;right:481.86px;">36957303</div>
<div class="t" style="top:360px;font-size:6.4px;line-height:9px;color:#1c1c1c;letter-spacing:-0.262px;right:447.66px;">51669454</div>
<div class="t" style="top:360px;font-size:6.4px;line-height:9px;color:#1c1c1c;letter-spacing:-0.237px;right:410.04px;">epm20</div>
<div class="t" style="top:360px;font-size:6.4px;line-height:9px;color:#1c1c1c;letter-spacing:-0.198px;right:379.40px;">sell</div>
<div class="t" style="top:360px;font-size:6.4px;line-height:9px;color:#1c1c1c;letter-spacing:0.255px;right:339.75px;">out</div>
<div class="t" style="top:360px;font-size:6.4px;line-height:9px;color:#1c1c1c;letter-spacing:-0.284px;right:291.08px;">1.00</div>
<div class="t" style="top:360px;font-size:6.4px;line-height:9px;color:#1c1c1c;letter-spacing:-0.252px;right:242.05px;">2886.50</div>
<div class="t" style="top:360px;font-size:6.4px;line-height:9px;color:#1c1c1c;letter-spacing:-0.252px;right:192.45px;">2883.00</div>
<div class="t" style="top:360px;font-size:6.4px;line-height:9px;color:#1c1c1c;letter-spacing:0.005px;right:103.59px;">-1.85</div>
<div class="t" style="top:360px;font-size:6.4px;line-height:9px;color:#1c1c1c;letter-spacing:-0.150px;right:11.95px;">75.00</div>
<svg style="left:208.1px;top:371.90000000000003px" width="6.2" height="8" viewBox="0 0 6.2 8"><path d="M0.5 0.5 H5.6 V5.8 L3.9 7.5 H0.5 Z" fill="#fff" stroke="#2a6fd0" stroke-width=".9"/><path d="M0.9 4.6 H5.2 V5.6 L3.7 7.1 H0.9 Z" fill="#d6e8fb"/><path d="M2.2 1.4 V4 M2.2 2.6 H4.6" stroke="#2a6fd0" stroke-width="1" fill="none"/></svg>
<div class="t" style="top:371px;font-size:6.4px;line-height:9px;color:#1c1c1c;letter-spacing:-0.191px;left:219.30px;">2020.04.28 09:45:41</div>
<div class="t" style="top:371px;font-size:6.4px;line-height:9px;color:#1c1c1c;letter-spacing:-0.262px;right:481.86px;">36959236</div>
<div class="t" style="top:371px;font-size:6.4px;line-height:9px;color:#1c1c1c;letter-spacing:-0.262px;right:447.66px;">51672350</div>
<div class="t" style="top:371px;font-size:6.4px;line-height:9px;color:#1c1c1c;letter-spacing:-0.237px;right:410.04px;">epm20</div>
<div class="t" style="top:371px;font-size:6.4px;line-height:9px;color:#1c1c1c;letter-spacing:0.244px;right:378.96px;">buy</div>
<div class="t" style="top:371px;font-size:6.4px;line-height:9px;color:#1c1c1c;letter-spacing:0.255px;right:339.75px;">out</div>
<div class="t" style="top:371px;font-size:6.4px;line-height:9px;color:#1c1c1c;letter-spacing:-0.284px;right:291.08px;">1.00</div>
<div class="t" style="top:371px;font-size:6.4px;line-height:9px;color:#1c1c1c;letter-spacing:-0.252px;right:242.05px;">2896.00</div>
<div class="t" style="top:371px;font-size:6.4px;line-height:9px;color:#1c1c1c;letter-spacing:-0.252px;right:192.45px;">2899.50</div>
<div class="t" style="top:371px;font-size:6.4px;line-height:9px;color:#1c1c1c;letter-spacing:0.005px;right:103.59px;">-1.85</div>
<div class="t" style="top:371px;font-size:6.4px;line-height:9px;color:#1c1c1c;letter-spacing:-0.150px;right:11.95px;">75.00</div>
<svg style="left:208.1px;top:383.1px" width="6.2" height="8" viewBox="0 0 6.2 8"><path d="M0.5 0.5 H5.6 V5.8 L3.9 7.5 H0.5 Z" fill="#fff" stroke="#2a6fd0" stroke-width=".9"/><path d="M0.9 4.6 H5.2 V5.6 L3.7 7.1 H0.9 Z" fill="#d6e8fb"/><path d="M2.2 1.4 V4 M2.2 2.6 H4.6" stroke="#2a6fd0" stroke-width="1" fill="none"/></svg>
<div class="t" style="top:383px;font-size:6.4px;line-height:9px;color:#1c1c1c;letter-spacing:-0.191px;left:219.30px;">2020.04.28 10:03:54</div>
<div class="t" style="top:383px;font-size:6.4px;line-height:9px;color:#1c1c1c;letter-spacing:-0.262px;right:481.86px;">36960391</div>
<div class="t" style="top:383px;font-size:6.4px;line-height:9px;color:#1c1c1c;letter-spacing:-0.262px;right:447.66px;">51674405</div>
<div class="t" style="top:383px;font-size:6.4px;line-height:9px;color:#1c1c1c;letter-spacing:-0.237px;right:410.04px;">epm20</div>
<div class="t" style="top:383px;font-size:6.4px;line-height:9px;color:#1c1c1c;letter-spacing:0.244px;right:378.96px;">buy</div>
<div class="t" style="top:383px;font-size:6.4px;line-height:9px;color:#1c1c1c;letter-spacing:0.255px;right:339.75px;">out</div>
<div class="t" style="top:383px;font-size:6.4px;line-height:9px;color:#1c1c1c;letter-spacing:-0.284px;right:291.08px;">1.00</div>
<div class="t" style="top:383px;font-size:6.4px;line-height:9px;color:#1c1c1c;letter-spacing:-0.252px;right:242.05px;">2902.75</div>
<div class="t" style="top:383px;font-size:6.4px;line-height:9px;color:#1c1c1c;letter-spacing:-0.252px;right:192.45px;">2906.25</div>
<div class="t" style="top:383px;font-size:6.4px;line-height:9px;color:#1c1c1c;letter-spacing:0.005px;right:103.59px;">-1.85</div>
<div class="t" style="top:383px;font-size:6.4px;line-height:9px;color:#1c1c1c;letter-spacing:-0.150px;right:11.95px;">75.00</div>
<svg style="left:208.1px;top:394.3px" width="6.2" height="8" viewBox="0 0 6.2 8"><path d="M0.5 0.5 H5.6 V5.8 L3.9 7.5 H0.5 Z" fill="#fff" stroke="#2a6fd0" stroke-width=".9"/><path d="M0.9 4.6 H5.2 V5.6 L3.7 7.1 H0.9 Z" fill="#d6e8fb"/><path d="M2.2 1.4 V4 M2.2 2.6 H4.6" stroke="#2a6fd0" stroke-width="1" fill="none"/></svg>
<div class="t" style="top:394px;font-size:6.4px;line-height:9px;color:#1c1c1c;letter-spacing:-0.191px;left:219.30px;">2020.04.28 10:55:00</div>
<div class="t" style="top:394px;font-size:6.4px;line-height:9px;color:#1c1c1c;letter-spacing:-0.262px;right:481.86px;">36962528</div>
<div class="t" style="top:394px;font-size:6.4px;line-height:9px;color:#1c1c1c;letter-spacing:-0.262px;right:447.66px;">51678567</div>
<div class="t" style="top:394px;font-size:6.4px;line-height:9px;color:#1c1c1c;letter-spacing:-0.237px;right:410.04px;">epm20</div>
<div class="t" style="top:394px;font-size:6.4px;line-height:9px;color:#1c1c1c;letter-spacing:0.244px;right:378.96px;">buy</div>
<div class="t" style="top:394px;font-size:6.4px;line-height:9px;color:#1c1c1c;letter-spacing:0.255px;right:339.75px;">out</div>
<div class="t" style="top:394px;font-size:6.4px;line-height:9px;color:#1c1c1c;letter-spacing:-0.284px;right:291.08px;">1.00</div>
<div class="t" style="top:394px;font-size:6.4px;line-height:9px;color:#1c1c1c;letter-spacing:-0.252px;right:242.05px;">2900.75</div>
<div class="t" style="top:394px;font-size:6.4px;line-height:9px;color:#1c1c1c;letter-spacing:-0.252px;right:192.45px;">2904.25</div>
<div class="t" style="top:394px;font-size:6.4px;line-height:9px;color:#1c1c1c;letter-spacing:0.005px;right:103.59px;">-1.85</div>
<div class="t" style="top:394px;font-size:6.4px;line-height:9px;color:#1c1c1c;letter-spacing:-0.150px;right:11.95px;">75.00</div>
<svg style="left:208.1px;top:405.5px" width="6.2" height="8" viewBox="0 0 6.2 8"><path d="M0.5 0.5 H5.6 V5.8 L3.9 7.5 H0.5 Z" fill="#fff" stroke="#e04a1a" stroke-width=".9"/><path d="M0.9 4.6 H5.2 V5.6 L3.7 7.1 H0.9 Z" fill="#fbe0d4"/><path d="M2.2 1.4 V4 M2.2 2.6 H4.6" stroke="#e04a1a" stroke-width="1" fill="none"/></svg>
<div class="t" style="top:405px;font-size:6.4px;line-height:9px;color:#1c1c1c;letter-spacing:-0.191px;left:219.30px;">2020.04.28 09:40:16</div>
<div class="t" style="top:405px;font-size:6.4px;line-height:9px;color:#1c1c1c;letter-spacing:-0.262px;right:481.86px;">36959003</div>
<div class="t" style="top:405px;font-size:6.4px;line-height:9px;color:#1c1c1c;letter-spacing:-0.262px;right:447.66px;">51672030</div>
<div class="t" style="top:405px;font-size:6.4px;line-height:9px;color:#1c1c1c;letter-spacing:-0.237px;right:410.04px;">epm20</div>
<div class="t" style="top:405px;font-size:6.4px;line-height:9px;color:#1c1c1c;letter-spacing:-0.198px;right:379.40px;">sell</div>
<div class="t" style="top:405px;font-size:6.4px;line-height:9px;color:#1c1c1c;letter-spacing:0.255px;right:339.75px;">out</div>
<div class="t" style="top:405px;font-size:6.4px;line-height:9px;color:#1c1c1c;letter-spacing:-0.284px;right:291.08px;">1.00</div>
<div class="t" style="top:405px;font-size:6.4px;line-height:9px;color:#1c1c1c;letter-spacing:-0.252px;right:242.05px;">2899.50</div>
<div class="t" style="top:405px;font-size:6.4px;line-height:9px;color:#1c1c1c;letter-spacing:-0.252px;right:192.45px;">2895.75</div>
<div class="t" style="top:405px;font-size:6.4px;line-height:9px;color:#1c1c1c;letter-spacing:0.005px;right:103.59px;">-1.85</div>
<div class="t" style="top:405px;font-size:6.4px;line-height:9px;color:#1c1c1c;letter-spacing:-0.150px;right:11.95px;">87.50</div>
<svg style="left:208.1px;top:416.70000000000005px" width="6.2" height="8" viewBox="0 0 6.2 8"><path d="M0.5 0.5 H5.6 V5.8 L3.9 7.5 H0.5 Z" fill="#fff" stroke="#2a6fd0" stroke-width=".9"/><path d="M0.9 4.6 H5.2 V5.6 L3.7 7.1 H0.9 Z" fill="#d6e8fb"/><path d="M2.2 1.4 V4 M2.2 2.6 H4.6" stroke="#2a6fd0" stroke-width="1" fill="none"/></svg>
<div class="t" style="top:416px;font-size:6.4px;line-height:9px;color:#1c1c1c;letter-spacing:-0.165px;left:219.30px;">2020.04.28 11:00:43</div>
<div class="t" style="top:416px;font-size:6.4px;line-height:9px;color:#1c1c1c;letter-spacing:-0.262px;right:481.86px;">36962727</div>
<div class="t" style="top:416px;font-size:6.4px;line-height:9px;color:#1c1c1c;letter-spacing:-0.262px;right:447.66px;">51678975</div>
<div class="t" style="top:416px;font-size:6.4px;line-height:9px;color:#1c1c1c;letter-spacing:-0.237px;right:410.04px;">epm20</div>
<div class="t" style="top:416px;font-size:6.4px;line-height:9px;color:#1c1c1c;letter-spacing:0.244px;right:378.96px;">buy</div>
<div class="t" style="top:416px;font-size:6.4px;line-height:9px;color:#1c1c1c;letter-spacing:0.255px;right:339.75px;">out</div>
<div class="t" style="top:416px;font-size:6.4px;line-height:9px;color:#1c1c1c;letter-spacing:-0.284px;right:291.08px;">1.00</div>
<div class="t" style="top:416px;font-size:6.4px;line-height:9px;color:#1c1c1c;letter-spacing:-0.252px;right:242.05px;">2899.25</div>
<div class="t" style="top:416px;font-size:6.4px;line-height:9px;color:#1c1c1c;letter-spacing:-0.252px;right:192.45px;">2903.00</div>
<div class="t" style="top:416px;font-size:6.4px;line-height:9px;color:#1c1c1c;letter-spacing:0.005px;right:103.59px;">-1.85</div>
<div class="t" style="top:416px;font-size:6.4px;line-height:9px;color:#1c1c1c;letter-spacing:-0.150px;right:11.95px;">87.50</div>
<svg style="left:208.4px;top:428.8999999999999px" width="6" height="6" viewBox="0 0 6 6"><circle cx="3" cy="3" r="2.6" fill="none" stroke="#222" stroke-width=".8"/><path d="M1.5 3 H4.5 M3 1.5 V4.5" stroke="#222" stroke-width=".8"/></svg>
<div class="t" style="top:427px;font-size:6.6px;line-height:9px;color:#1a1a1a;font-weight:bold;letter-spacing:0.045px;left:219.40px;">Прибыль: 417.58</div>
<div class="t" style="top:427px;font-size:6.6px;line-height:9px;color:#1a1a1a;font-weight:bold;letter-spacing:-0.042px;left:278.60px;">Кредит: 0.00</div>
<div class="t" style="top:427px;font-size:6.6px;line-height:9px;color:#1a1a1a;font-weight:bold;letter-spacing:-0.016px;left:322.40px;">Депозит: 0.00</div>
<div class="t" style="top:427px;font-size:6.6px;line-height:9px;color:#1a1a1a;font-weight:bold;letter-spacing:-0.073px;left:370.00px;">Снятие: 0.00</div>
<div class="t" style="top:427px;font-size:6.6px;line-height:9px;color:#1a1a1a;font-weight:bold;letter-spacing:-0.131px;left:413.60px;">Баланс: 417.58</div>
<div class="t" style="top:427px;font-size:6.6px;line-height:9px;color:#1a1a1a;font-weight:bold;letter-spacing:0.059px;right:103.54px;">-79.92</div>
<div class="t" style="top:427px;font-size:6.6px;line-height:9px;color:#1a1a1a;font-weight:bold;letter-spacing:-0.148px;right:65.55px;">0.00</div>
<div class="t" style="top:427px;font-size:6.6px;line-height:9px;color:#1a1a1a;font-weight:bold;letter-spacing:-0.154px;right:11.95px;">497.50</div>
<div style="left:791.20px;top:257.70px;width:8.80px;height:191.30px;background:#f0f0f0;"></div>
<svg style="left:793.3000000000001px;top:259.8px" width="4.6" height="3.6" viewBox="0 0 4.6 3.6"><path d="M0.4 2.8 L2.3 0.8 L4.2 2.8" stroke="#444" stroke-width="1.1" fill="none"/></svg>
<div style="left:791.60px;top:393.20px;width:6.80px;height:44.40px;background:#c8c8c8;"></div>
<svg style="left:793.5px;top:440.59999999999997px" width="4.6" height="3.6" viewBox="0 0 4.6 3.6"><path d="M0.4 0.8 L2.3 2.8 L4.2 0.8" stroke="#444" stroke-width="1.1" fill="none"/></svg>
<div style="left:206.90px;top:437.60px;width:584.30px;height:11.40px;background:#ffffff;"></div>
<div style="left:207.60px;top:446.30px;width:75.00px;height:4.00px;background:#fff;border:0.8px solid #555;"></div>
<div style="left:319.40px;top:446.30px;width:472.00px;height:4.00px;background:#fff;border:0.8px solid #555;"></div>
</div>
</body>
</html>
